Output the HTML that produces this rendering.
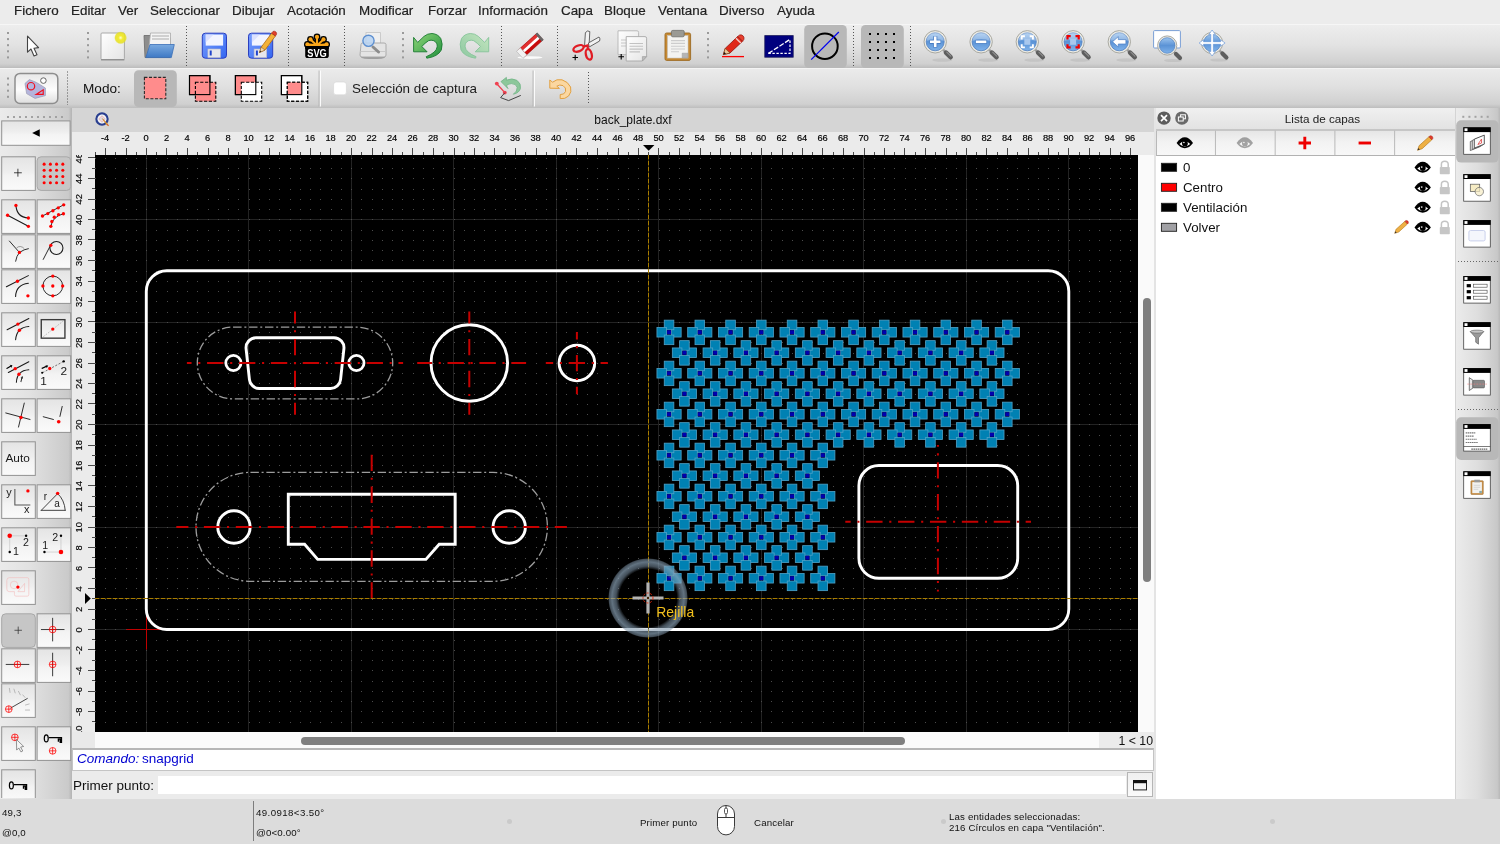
<!DOCTYPE html>
<html lang="es"><head><meta charset="utf-8"><title>back_plate.dxf</title><style>
*{box-sizing:border-box;margin:0;padding:0}
html,body{width:1500px;height:844px;overflow:hidden;background:#ececec;font-family:"Liberation Sans",sans-serif;color:#1a1a1a}
#root{will-change:transform;position:relative;width:1500px;height:844px;overflow:hidden;background:#e9e9e9}
.abs{position:absolute}
#menubar{position:absolute;left:0;top:0;width:1500px;height:24px;background:#ececec}
#menubar span{position:absolute;top:2.2px;-webkit-text-stroke:0.2px #222;font-size:13.4px;line-height:18px;color:#222;white-space:nowrap}
#tb1{position:absolute;left:0;top:24px;width:1500px;height:44px;background:linear-gradient(#ededed 0%,#e3e3e3 45%,#d0d0d0 90%,#bcbcbc 100%);border-top:1px solid #f6f6f6}
#tb2{position:absolute;left:0;top:68px;width:1500px;height:40px;background:linear-gradient(#ebebeb 0%,#e0e0e0 45%,#d0d0d0 90%,#bdbdbd 100%);border-top:1px solid #f4f4f4}
.vdots{position:absolute;width:2px;background-image:linear-gradient(#8a8a8a 50%,transparent 50%);background-size:2px 5.5px}
.sep{position:absolute;width:1px;background-image:linear-gradient(#555 34%,transparent 34%);background-size:1px 3px}
.sel{position:absolute;background:#b9b9b9;border-radius:5px}
#ldock{position:absolute;left:0;top:108px;width:72px;height:691px;background:linear-gradient(90deg,#ebebeb 0%,#e2e2e2 40%,#cacaca 95%,#b4b4b4 100%)}
.lb{position:absolute;width:34px;height:34px;background:linear-gradient(#fbfbfb,#ececec 60%,#e4e4e4);border:1px solid #b7b7b7;border-radius:1px}
.lb.on{background:#c4c4c4;border-color:#a8a8a8;border-radius:4px}
.lb svg{position:absolute;left:0;top:0;width:32px;height:32px}
#mdititle{position:absolute;left:72px;top:108px;width:1082px;height:24px;background:#d5d5d5}
#mdititle .t{position:absolute;left:0;width:1122px;top:5px;text-align:center;font-size:12px;line-height:14px;color:#111}
#rulerT{position:absolute;left:72px;top:132px;width:1082px;height:23px;background:#ebebeb}
#rulerL{position:absolute;left:72px;top:155px;width:23px;height:577px;background:#ebebeb}
#canvas{position:absolute;left:95px;top:155px;width:1043px;height:577px;background:#000}
#vscroll{position:absolute;left:1138px;top:155px;width:16px;height:577px;background:#fafafa}
#hscroll{position:absolute;left:95px;top:732px;width:1004px;height:16px;background:#fafafa}
#zoomlbl{position:absolute;left:1099px;top:732px;width:55px;height:16px;background:#ebebeb;font-size:12.3px;line-height:18px;text-align:right;padding-right:1px;color:#111}
#cmdhist{position:absolute;left:72px;top:748px;width:1082px;height:23px;background:#fff;border:1px solid #c4c4c4;border-top:2px solid #b6b6b6}
#cmdhist i{position:absolute;left:4px;top:-0.4px;font-size:13.5px;line-height:17px;color:#0000d0}
#cmdline{position:absolute;left:72px;top:771px;width:1082px;height:28px;background:#ebebeb}
#cmdline .lab{position:absolute;left:1px;top:6.5px;font-size:13.5px;line-height:16px;color:#111}
#cmdline .inp{position:absolute;left:86px;top:5px;width:968px;height:18px;background:#fff}
#cmdline .btn{position:absolute;left:1055px;top:1px;width:26px;height:25px;background:linear-gradient(#f0f0f0,#fafafa);border:1px solid #b5b5b5}
#status{position:absolute;left:0;top:799px;width:1500px;height:45px;background:#dcdcdc}
#status span{position:absolute;font-size:9.7px;line-height:12px;color:#111;white-space:nowrap;letter-spacing:0.15px}
#rpanel{position:absolute;left:1154px;top:108px;width:301px;height:691px;background:#fff}
#rdock{position:absolute;left:1455px;top:108px;width:45px;height:691px;background:linear-gradient(90deg,#ececec 0%,#dedede 50%,#c8c8c8 94%,#b8b8b8 100%)}
</style></head><body><div id="root">
<div id="menubar"><span style="left:14px">Fichero</span><span style="left:71px">Editar</span><span style="left:118px">Ver</span><span style="left:150px">Seleccionar</span><span style="left:232px">Dibujar</span><span style="left:287px">Acotación</span><span style="left:359px">Modificar</span><span style="left:428px">Forzar</span><span style="left:478px">Información</span><span style="left:561px">Capa</span><span style="left:604px">Bloque</span><span style="left:658px">Ventana</span><span style="left:719px">Diverso</span><span style="left:777px">Ayuda</span></div>
<div id="tb1"><svg class="abs" style="left:0;top:-1px" width="1500" height="44" viewBox="0 24 1500 44"><defs>
<linearGradient id="gBlue" x1="0" y1="0" x2="0" y2="1"><stop offset="0" stop-color="#9cc4ee"/><stop offset="0.5" stop-color="#5b93d6"/><stop offset="1" stop-color="#7fb2ea"/></linearGradient>
<linearGradient id="gPaper" x1="0" y1="0" x2="1" y2="1"><stop offset="0" stop-color="#ffffff"/><stop offset="1" stop-color="#e4e4e4"/></linearGradient>
<linearGradient id="gFolder" x1="0" y1="0" x2="0" y2="1"><stop offset="0" stop-color="#7aaae0"/><stop offset="1" stop-color="#3d78c4"/></linearGradient>
<linearGradient id="gGreen" x1="0" y1="0" x2="1" y2="1"><stop offset="0" stop-color="#8fd678"/><stop offset="1" stop-color="#1f8f3c"/></linearGradient>
<linearGradient id="gGreenL" x1="0" y1="0" x2="1" y2="1"><stop offset="0" stop-color="#c4e6bf"/><stop offset="1" stop-color="#8cc7a0"/></linearGradient>
<linearGradient id="gFloppy" x1="0" y1="0" x2="1" y2="1"><stop offset="0" stop-color="#7aa0ff"/><stop offset="1" stop-color="#3466f0"/></linearGradient>
<radialGradient id="gGlow"><stop offset="0" stop-color="#ffffd0"/><stop offset="0.35" stop-color="#f2ea30"/><stop offset="0.8" stop-color="#e6e020" stop-opacity="0.85"/><stop offset="1" stop-color="#e6e020" stop-opacity="0"/></radialGradient>
<g id="lens"><ellipse cx="7" cy="18.2" rx="10" ry="1.8" fill="#000" opacity="0.07"/><path d="M7.4 7.4L11 11" stroke="#9c9c9c" stroke-width="2.4" stroke-linecap="round"/><path d="M10.8 10.8L15.4 15.4" stroke="#5e5e5e" stroke-width="4.6" stroke-linecap="round"/><path d="M11.6 10.4L15.6 14.4" stroke="#8e8e8e" stroke-width="1.2" stroke-linecap="round"/><circle cx="0" cy="0" r="11.2" fill="#ecebe4" stroke="#a9a9a2" stroke-width="1"/><circle cx="0" cy="0" r="9" fill="url(#gBlue)" stroke="#4f7fc0" stroke-width="0.8"/><path d="M-8.6 -1A8.6 8.6 0 0 1 8.6 -1Q0 -4 -8.6 -1Z" fill="#fff" opacity="0.28"/></g>
</defs><rect x="7" y="32.0" width="2" height="2" fill="#9a9a9a"/><rect x="7" y="38.1" width="2" height="2" fill="#9a9a9a"/><rect x="7" y="44.2" width="2" height="2" fill="#9a9a9a"/><rect x="7" y="50.3" width="2" height="2" fill="#9a9a9a"/><rect x="7" y="56.4" width="2" height="2" fill="#9a9a9a"/><rect x="87" y="32.0" width="2" height="2" fill="#9a9a9a"/><rect x="87" y="38.1" width="2" height="2" fill="#9a9a9a"/><rect x="87" y="44.2" width="2" height="2" fill="#9a9a9a"/><rect x="87" y="50.3" width="2" height="2" fill="#9a9a9a"/><rect x="87" y="56.4" width="2" height="2" fill="#9a9a9a"/><rect x="402" y="32.0" width="2" height="2" fill="#9a9a9a"/><rect x="402" y="38.1" width="2" height="2" fill="#9a9a9a"/><rect x="402" y="44.2" width="2" height="2" fill="#9a9a9a"/><rect x="402" y="50.3" width="2" height="2" fill="#9a9a9a"/><rect x="402" y="56.4" width="2" height="2" fill="#9a9a9a"/><rect x="707" y="32.0" width="2" height="2" fill="#9a9a9a"/><rect x="707" y="38.1" width="2" height="2" fill="#9a9a9a"/><rect x="707" y="44.2" width="2" height="2" fill="#9a9a9a"/><rect x="707" y="50.3" width="2" height="2" fill="#9a9a9a"/><rect x="707" y="56.4" width="2" height="2" fill="#9a9a9a"/><line x1="186.5" y1="26" x2="186.5" y2="66" stroke="#555" stroke-width="1" stroke-dasharray="1 2"/><line x1="288.5" y1="26" x2="288.5" y2="66" stroke="#555" stroke-width="1" stroke-dasharray="1 2"/><line x1="344.5" y1="26" x2="344.5" y2="66" stroke="#555" stroke-width="1" stroke-dasharray="1 2"/><line x1="501.5" y1="26" x2="501.5" y2="66" stroke="#555" stroke-width="1" stroke-dasharray="1 2"/><line x1="557.5" y1="26" x2="557.5" y2="66" stroke="#555" stroke-width="1" stroke-dasharray="1 2"/><line x1="853.5" y1="26" x2="853.5" y2="66" stroke="#555" stroke-width="1" stroke-dasharray="1 2"/><line x1="910.5" y1="26" x2="910.5" y2="66" stroke="#555" stroke-width="1" stroke-dasharray="1 2"/><path d="M27.5 36.2V52.2L31 49L34 56L37 54.8L34 48.2L38.6 47.6Z" fill="#fff" stroke="#444" stroke-width="1.1" stroke-linejoin="round"/><rect x="101" y="33" width="23.4" height="26.6" rx="1" fill="url(#gPaper)" stroke="#a9a9a9" stroke-width="1"/><path d="M101 59.8H124.4" stroke="#8a8a8a" stroke-width="1.2"/><circle cx="120.6" cy="37.8" r="6.5" fill="url(#gGlow)"/><path d="M144 35.5h6l1.5 2H170v20H145Z" fill="#8d8d8d" stroke="#6a6a6a" stroke-width="0.8"/><path d="M150.5 33H170.5V52H148.5Z" fill="#f4f4f4" stroke="#aaa" stroke-width="0.8"/><path d="M152 36h17M152 39h17" stroke="#c4c4c4" stroke-width="1.6"/><path d="M150 44.5H174.3L171.3 57.6H145.8Z" fill="url(#gFolder)" stroke="#3a6fb8" stroke-width="0.8"/><rect x="202.3" y="33.2" width="24.2" height="25" rx="3" fill="url(#gFloppy)" stroke="#2a3fc0" stroke-width="1"/><rect x="205.70000000000002" y="34.6" width="17.4" height="11" fill="#f2f4ff"/><path d="M205.70000000000002 34.6h8l-8 8Z" fill="#d4dcff" opacity="0.8"/><rect x="207.9" y="49" width="12.6" height="8.6" fill="#e6e6ec" stroke="#b8b8c8" stroke-width="0.6"/><rect x="209.70000000000002" y="50.5" width="2" height="5" fill="#2244cc"/><rect x="248.5" y="33.2" width="24.2" height="25" rx="3" fill="url(#gFloppy)" stroke="#2a3fc0" stroke-width="1"/><rect x="251.9" y="34.6" width="17.4" height="11" fill="#f2f4ff"/><path d="M251.9 34.6h8l-8 8Z" fill="#d4dcff" opacity="0.8"/><rect x="254.1" y="49" width="12.6" height="8.6" fill="#e6e6ec" stroke="#b8b8c8" stroke-width="0.6"/><rect x="255.9" y="50.5" width="2" height="5" fill="#2244cc"/><path d="M259.5 52.5L261.2 47.2L271.6 33.2L275.4 36L265 50Z" fill="#f4b23a" stroke="#b06a10" stroke-width="0.8"/><path d="M271.6 33.2L273 31.4Q274.6 30.8 276 32Q277 33.2 276.4 34.6L275.4 36Z" fill="#e0402a" stroke="#a02010" stroke-width="0.6"/><path d="M259.5 52.5L261.2 47.2L265 50Z" fill="#f0d8b0" stroke="#805020" stroke-width="0.5"/><path d="M259.5 52.5l0.7-2l1.1 0.9Z" fill="#222"/><rect x="305.2" y="44.6" width="23.6" height="13.4" rx="2.6" fill="#000"/><g stroke="#000" stroke-width="5" stroke-linecap="round"><path d="M317 45.4L317 36.9"/><path d="M317 45.4L310.5 39.4"/><path d="M317 45.4L323.5 39.4"/><path d="M317 45.4L307.4 44.4"/><path d="M317 45.4L326.6 44.4"/></g><circle cx="317" cy="36.9" r="3.4" fill="#000"/><circle cx="310.5" cy="39.4" r="3.4" fill="#000"/><circle cx="323.5" cy="39.4" r="3.4" fill="#000"/><circle cx="307.4" cy="44.4" r="3.4" fill="#000"/><circle cx="326.6" cy="44.4" r="3.4" fill="#000"/><g stroke="#f9a61a" stroke-width="2.1" stroke-linecap="round"><path d="M317 45.4L317 36.9"/><path d="M317 45.4L310.5 39.4"/><path d="M317 45.4L323.5 39.4"/><path d="M317 45.4L307.4 44.4"/><path d="M317 45.4L326.6 44.4"/></g><circle cx="317" cy="36.9" r="2.1" fill="#f9a61a"/><circle cx="310.5" cy="39.4" r="2.1" fill="#f9a61a"/><circle cx="323.5" cy="39.4" r="2.1" fill="#f9a61a"/><circle cx="307.4" cy="44.4" r="2.1" fill="#f9a61a"/><circle cx="326.6" cy="44.4" r="2.1" fill="#f9a61a"/><rect x="306.6" y="44" width="20.8" height="2" fill="#f9a61a"/><rect x="305.2" y="46" width="23.6" height="3" fill="#000"/><text x="317" y="56.6" text-anchor="middle" font-family="Liberation Sans, sans-serif" font-weight="bold" font-size="10.4" fill="#fff" textLength="19.6" lengthAdjust="spacingAndGlyphs">SVG</text><ellipse cx="373" cy="57.5" rx="12" ry="1.6" fill="#000" opacity="0.25"/><rect x="366" y="32.6" width="14.5" height="13" fill="#efefef" stroke="#c2c2c2" stroke-width="0.8"/><path d="M361 44.5Q361 43 362.5 43H384Q386 43 386 44.5V55Q386 57 384 57H362Q360 57 360 55Z" fill="#e4e4e4" stroke="#a4a4a4" stroke-width="0.9"/><path d="M360.5 51.5H386" stroke="#c8c8c8" stroke-width="1"/><path d="M373 47L378.5 52" stroke="#8c8c8c" stroke-width="3" stroke-linecap="round"/><circle cx="368.5" cy="40.8" r="5.6" fill="#b8d4f2" fill-opacity="0.85" stroke="#5d8fd0" stroke-width="1.4"/><path d="M413.6 37.4L413.6 51.8L427.1 51.8L421.8 46.5Q425 43 428.5 40.7Q431 39.6 433.8 40.7Q437.6 42.6 437.2 46.8Q436.4 52.6 426.2 56.7L426.8 58.2Q438 56.6 441.3 50Q443.2 44 440.8 38.6Q438 34 432 33.5Q427.5 33.4 424 36.4L417.7 42.4Z" fill="url(#gGreen)" stroke="#1a7a30" stroke-width="0.9" stroke-linejoin="round"/><g transform="translate(902.3 0) scale(-1 1)"><path d="M413.6 37.4L413.6 51.8L427.1 51.8L421.8 46.5Q425 43 428.5 40.7Q431 39.6 433.8 40.7Q437.6 42.6 437.2 46.8Q436.4 52.6 426.2 56.7L426.8 58.2Q438 56.6 441.3 50Q443.2 44 440.8 38.6Q438 34 432 33.5Q427.5 33.4 424 36.4L417.7 42.4Z" fill="url(#gGreenL)" stroke="#86c49a" stroke-width="0.9" stroke-linejoin="round"/></g><ellipse cx="530" cy="57.6" rx="12.5" ry="1.4" fill="#fff" opacity="0.9"/><g transform="translate(530.4 45.2) rotate(-42)"><rect x="-13" y="-4.6" width="26" height="9.2" rx="1" fill="#c80a0a" stroke="#900" stroke-width="0.5"/><rect x="-9" y="-4.4" width="21" height="3" fill="#e23030"/><rect x="-9" y="-1.4" width="22" height="2.8" fill="#fff"/><rect x="-14.4" y="-4.8" width="5.2" height="9.6" fill="#f2f2f2" stroke="#aaa" stroke-width="0.5"/><rect x="11" y="-4.8" width="2.6" height="9.6" fill="#666"/></g><path d="M584.6 45.4L585.4 32.6Q587.6 29.8 589.8 31.6L589 46.4Z" fill="#f2f2f2" stroke="#555" stroke-width="0.9"/><path d="M588.4 43L599 37Q600.6 38.6 599.6 41L589.2 47Z" fill="#f2f2f2" stroke="#555" stroke-width="0.9"/><g fill="none" stroke="#e01c24" stroke-width="2.3"><ellipse cx="578.5" cy="48.4" rx="5.4" ry="2.9" transform="rotate(-22 578.5 48.4)"/><ellipse cx="588.8" cy="54.4" rx="2.9" ry="5.4" transform="rotate(-14 588.8 54.4)"/></g><path d="M583.5 46.6L587.5 45.5L588 49.5" stroke="#e01c24" stroke-width="2.2" fill="none"/><path d="M572.5 57.5H578M575.2 54.8V60.2" stroke="#000" stroke-width="1.1"/><path d="M618 30.8H637Q638.6 30.8 638.6 32.4V54.6H618Z" fill="url(#gPaper)" stroke="#b4b4b4" stroke-width="0.9"/><path d="M621 40h6M621 43h6M621 46h6" stroke="#c6c6c6" stroke-width="1"/><path d="M626.2 36.6H645Q646.6 36.6 646.6 38.2V56.6L642.4 61H626.2Z" fill="url(#gPaper)" stroke="#a8a8a8" stroke-width="0.9"/><path d="M646.6 56.6H642.4V61Z" fill="#bdbdbd" stroke="#999" stroke-width="0.6"/><path d="M629.5 43.5H643M629.5 46.3H643M629.5 49.1H643M629.5 51.9H640" stroke="#c2c2c2" stroke-width="1.1"/><path d="M618.4 56.8H624M621.2 54V59.6" stroke="#000" stroke-width="1.1"/><rect x="665" y="33" width="25.6" height="27.4" rx="1.6" fill="#c68a34" stroke="#9c6a22" stroke-width="0.9"/><rect x="667.6" y="35.6" width="20.4" height="22.4" fill="#f3f3f1" stroke="#c8c8c8" stroke-width="0.6"/><path d="M671.4 31.6Q671.4 30.4 672.8 30.4H682.8Q684.2 30.4 684.2 31.6V35.6Q684.2 36.8 682.8 36.8H672.8Q671.4 36.8 671.4 35.6Z" fill="#9a9a94" stroke="#6f6f6a" stroke-width="0.8"/><path d="M671 40.6H685M671 43.4H685M671 46.2H685M671 49H685M671 51.8H679" stroke="#cdcdcd" stroke-width="1.1"/><path d="M682.2 58V53.2H688V58Z" fill="#b5b5b5" stroke="#999" stroke-width="0.5"/><path d="M722 56.6H744" stroke="#f00" stroke-width="1.3"/><path d="M723.4 54.6L725.2 48.4L737.8 36.4L742.6 41.2L730 53Z" fill="#e02818" stroke="#901008" stroke-width="0.8" stroke-linejoin="round"/><path d="M737.8 36.4L739.6 35Q741.6 34.4 743.2 36Q744.6 37.8 743.8 39.6L742.6 41.2Z" fill="#e84030" stroke="#901008" stroke-width="0.7"/><path d="M736 38.2L740.8 43" stroke="#f4c8c0" stroke-width="1.6"/><path d="M723.4 54.6L725.2 48.4L730 53Z" fill="#eac89a" stroke="#704010" stroke-width="0.6"/><path d="M723.4 54.6l0.8-2.6l1.8 1.8Z" fill="#111"/><rect x="764.8" y="35.6" width="28.4" height="21.6" fill="#00007e" stroke="#1c1c5c" stroke-width="0.8"/><path d="M768.4 53.4H790V39.4" stroke="#fff" stroke-width="1.2" fill="none" stroke-dasharray="2.4 1.6"/><path d="M768.4 53.4L790 39.4" stroke="#fff" stroke-width="1.3" stroke-dasharray="5 1.6"/><rect x="804.2" y="25" width="42.6" height="43" rx="4.5" fill="#b8b8b8"/><circle cx="824.9" cy="46.2" r="12.8" fill="none" stroke="#000" stroke-width="2"/><path d="M811.2 59.6L838.8 32" stroke="#0000f0" stroke-width="1.2"/><rect x="861" y="25" width="42.8" height="43" rx="4.5" fill="#b8b8b8"/><rect x="869" y="33" width="2" height="2" fill="#000"/><rect x="869" y="41" width="2" height="2" fill="#000"/><rect x="869" y="49" width="2" height="2" fill="#000"/><rect x="869" y="57" width="2" height="2" fill="#000"/><rect x="877" y="33" width="2" height="2" fill="#000"/><rect x="877" y="41" width="2" height="2" fill="#000"/><rect x="877" y="49" width="2" height="2" fill="#000"/><rect x="877" y="57" width="2" height="2" fill="#000"/><rect x="885" y="33" width="2" height="2" fill="#000"/><rect x="885" y="41" width="2" height="2" fill="#000"/><rect x="885" y="49" width="2" height="2" fill="#000"/><rect x="885" y="57" width="2" height="2" fill="#000"/><rect x="893" y="33" width="2" height="2" fill="#000"/><rect x="893" y="41" width="2" height="2" fill="#000"/><rect x="893" y="49" width="2" height="2" fill="#000"/><rect x="893" y="57" width="2" height="2" fill="#000"/><g transform="translate(935.2 41.8)"><use href="#lens"/><path d="M-5.6 0H5.6M0 -5.6V5.6" stroke="#4a7ec4" stroke-width="4.2"/><path d="M-5.2 0H5.2M0 -5.2V5.2" stroke="#fff" stroke-width="2.6"/></g><g transform="translate(981.1 41.8)"><use href="#lens"/><path d="M-5.6 0H5.6" stroke="#4a7ec4" stroke-width="4.2"/><path d="M-5.2 0H5.2" stroke="#fff" stroke-width="2.6"/></g><g transform="translate(1027.3 41.8)"><use href="#lens"/><rect x="-3" y="-3" width="6" height="6" fill="#a9c8ee"/><path d="M-5.6 -2.4V-5.6H-2.4M2.4 -5.6H5.6V-2.4M5.6 2.4V5.6H2.4M-2.4 5.6H-5.6V2.4" stroke="#fff" stroke-width="1.9" fill="none"/></g><g transform="translate(1073.1 41.8)"><use href="#lens"/><rect x="-3" y="-3" width="6" height="6" fill="#a9c8ee"/><path d="M-5.6 -2.4V-5.6H-2.4M2.4 -5.6H5.6V-2.4M5.6 2.4V5.6H2.4M-2.4 5.6H-5.6V2.4" stroke="#f00000" stroke-width="2.2" fill="none"/></g><g transform="translate(1119.3 41.8)"><use href="#lens"/><path d="M-6.8 0L-1 -5.2V-2.2H6.6V2.2H-1V5.2Z" fill="#fff" stroke="#4a7ec4" stroke-width="0.7"/></g><rect x="1153.6" y="30.6" width="26.8" height="17.4" rx="1" fill="#fff" stroke="#7a9fd6" stroke-width="1"/><ellipse cx="1173" cy="60.5" rx="9" ry="1.6" fill="#000" opacity="0.07"/><path d="M1173.4 51.4L1176 54" stroke="#9c9c9c" stroke-width="2.2" stroke-linecap="round"/><path d="M1176 54L1180 58" stroke="#5e5e5e" stroke-width="4.2" stroke-linecap="round"/><circle cx="1167.2" cy="45.5" r="9.6" fill="#ecebe4" stroke="#a9a9a2" stroke-width="1"/><circle cx="1167.2" cy="45.5" r="7.8" fill="url(#gBlue)" stroke="#4f7fc0" stroke-width="0.7"/><ellipse cx="1219" cy="60" rx="9" ry="1.6" fill="#000" opacity="0.07"/><path d="M1219.6 50.6L1222.4 53.4" stroke="#9c9c9c" stroke-width="2.2" stroke-linecap="round"/><path d="M1222.4 53.4L1226.4 57.4" stroke="#5e5e5e" stroke-width="4.2" stroke-linecap="round"/><circle cx="1212.1" cy="43" r="10.6" fill="#ecebe4" stroke="#a9a9a2" stroke-width="1"/><circle cx="1212.1" cy="43" r="8.6" fill="url(#gBlue)" stroke="#4f7fc0" stroke-width="0.7"/><g transform="translate(1212.1 43)" fill="#fff" stroke="#5b8fd6" stroke-width="0.6"><path d="M0 -13L3.2 -8.6H1.3V-1.3H8.6V-3.2L13 0L8.6 3.2V1.3H1.3V8.6H3.2L0 13L-3.2 8.6H-1.3V1.3H-8.6V3.2L-13 0L-8.6 -3.2V-1.3H-1.3V-8.6H-3.2Z"/></g></svg></div>
<div id="tb2"><svg class="abs" style="left:0;top:-1px" width="1500" height="40" viewBox="0 68 1500 40"><rect x="7" y="77.5" width="2" height="2" fill="#9a9a9a"/><rect x="7" y="83.6" width="2" height="2" fill="#9a9a9a"/><rect x="7" y="89.7" width="2" height="2" fill="#9a9a9a"/><rect x="7" y="95.8" width="2" height="2" fill="#9a9a9a"/><defs><linearGradient id="gBtn" x1="0" y1="0" x2="0" y2="1"><stop offset="0" stop-color="#e8e8e8"/><stop offset="0.55" stop-color="#fdfdfd"/><stop offset="1" stop-color="#dedede"/></linearGradient></defs><rect x="15" y="73.4" width="42.8" height="30" rx="5" fill="url(#gBtn)" stroke="#8e8e8e" stroke-width="1.5"/><path d="M25 83.4L29.4 79.6L36.4 82.4L45.4 88V95.6L35 98.4L26.6 93.6Z" fill="#b4b4dc" stroke="#9a9ab0" stroke-width="0.7"/><circle cx="31" cy="86.2" r="3.7" fill="none" stroke="#f01020" stroke-width="1.2"/><path d="M36.2 94.4H43.2V89.8Z" fill="none" stroke="#f01020" stroke-width="1.2"/><circle cx="43.4" cy="80.6" r="2.8" fill="#fff" stroke="#555" stroke-width="0.9"/><line x1="67.5" y1="71.5" x2="67.5" y2="105" stroke="#555" stroke-width="1" stroke-dasharray="1 2"/><text x="83" y="93" font-family="Liberation Sans, sans-serif" font-size="13.6" fill="#111">Modo:</text><rect x="134" y="70.2" width="42.8" height="36.8" rx="4.5" fill="#b8b8b8"/><rect x="144.4" y="77.4" width="21.4" height="21.4" fill="#ff8c8c" stroke="#2a2a2a" stroke-width="1.1" stroke-dasharray="3 1.6"/><rect x="189.5" y="75.6" width="20.4" height="19" fill="#ff8c8c" stroke="#000" stroke-width="1.1"/><rect x="195.4" y="82.3" width="20.4" height="19" fill="#ff8c8c" stroke="#000" stroke-width="1.1" stroke-dasharray="3.2 1.6"/><rect x="189.5" y="75.6" width="20.4" height="19" fill="none" stroke="#000" stroke-width="1.1"/><rect x="235.4" y="75.6" width="20.4" height="19" fill="#ff8c8c" stroke="#000" stroke-width="1.1"/><rect x="241.3" y="82.3" width="20.4" height="19" fill="#fff" stroke="#000" stroke-width="1.1" stroke-dasharray="3.2 1.6"/><rect x="235.4" y="75.6" width="20.4" height="19" fill="none" stroke="#000" stroke-width="1.1"/><rect x="281.4" y="75.6" width="20.4" height="19" fill="#fff" stroke="#000" stroke-width="1.1"/><rect x="287.3" y="82.3" width="20.4" height="19" fill="#fff" stroke="#000" stroke-width="1.1" stroke-dasharray="3.2 1.6"/><rect x="287.3" y="82.3" width="14.5" height="12.3" fill="#ff8c8c"/><rect x="281.4" y="75.6" width="20.4" height="19" fill="none" stroke="#000" stroke-width="1.1"/><rect x="287.3" y="82.3" width="20.4" height="19" fill="none" stroke="#000" stroke-width="1.1" stroke-dasharray="3.2 1.6"/><path d="M320.2 70.5V106.5" stroke="#fff" stroke-width="1.4"/><path d="M319.1 70.5V106.5" stroke="#a8a8a8" stroke-width="0.8"/><path d="M534.2 70.5V106.5" stroke="#fff" stroke-width="1.4"/><path d="M533.1 70.5V106.5" stroke="#a8a8a8" stroke-width="0.8"/><rect x="333.6" y="82" width="12.8" height="12.8" rx="2.6" fill="#fff" stroke="#d4d4d4" stroke-width="0.6"/><text x="352" y="92.8" font-family="Liberation Sans, sans-serif" font-size="13.4" fill="#1a1a1a">Selección de captura</text><path d="M501 81.6L506.4 77.4V80.2Q512 77.6 517 80.4Q521.4 83.6 520.4 88.6Q519 93 513.4 94.2Q517.4 91.4 517.2 87.4Q516.2 83.6 511.4 83.6Q508.6 83.8 506.4 85.6L508 88.6Z" fill="#8cc79a" stroke="#6fb484" stroke-width="0.8"/><path d="M497 84L504.6 92.4" stroke="#f04050" stroke-width="1.4"/><circle cx="496.8" cy="83.6" r="1.9" fill="#f04050"/><circle cx="504.8" cy="92.6" r="1.9" fill="#f04050"/><path d="M504.8 92.8L500.6 97.6L508.6 100.6L520.8 95.4" stroke="#444" stroke-width="1" fill="none"/><path d="M549.8 88.2V80L552.6 82.2Q556.6 78.6 562 79.8Q568 81.6 570.6 87Q572 92 568.6 96Q565 99.4 560.2 98.6V94.6Q564.4 94.8 565.6 91.4Q566.4 87.6 563 85.6Q559.6 84.2 556.8 86.2L559.4 88.4Z" fill="#fbd7a0" stroke="#e2a040" stroke-width="1" stroke-linejoin="round"/><line x1="588.5" y1="72" x2="588.5" y2="104" stroke="#555" stroke-width="1" stroke-dasharray="1 2"/></svg></div>
<div id="ldock"><div class="abs" style="left:7px;top:8px;width:58px;height:2px;background-image:linear-gradient(90deg,#a2a2a2 2px,transparent 2px);background-size:6px 2px"></div><svg class="abs" style="left:0;top:0" width="72" height="690" viewBox="0 0 72 690"><defs><linearGradient id="lbg" x1="0" y1="0" x2="0" y2="1"><stop offset="0" stop-color="#e4e4e4"/><stop offset="0.45" stop-color="#eeeeee"/><stop offset="0.55" stop-color="#f3f3f3"/><stop offset="1" stop-color="#fafafa"/></linearGradient></defs><rect x="1.7" y="12.9" width="68.4" height="24.4" fill="url(#lbg)" stroke="#929292" stroke-width="1"/><rect x="1.7" y="48.8" width="33.6" height="33.6" fill="url(#lbg)" stroke="#929292" stroke-width="1"/><rect x="37.1" y="48.8" width="33.6" height="33.6" rx="4" fill="#c6c6c6" stroke="#a8a8a8" stroke-width="1"/><rect x="1.7" y="91.8" width="33.6" height="33.6" fill="url(#lbg)" stroke="#929292" stroke-width="1"/><rect x="37.1" y="91.8" width="33.6" height="33.6" fill="url(#lbg)" stroke="#929292" stroke-width="1"/><rect x="1.7" y="126.8" width="33.6" height="33.6" fill="url(#lbg)" stroke="#929292" stroke-width="1"/><rect x="37.1" y="126.8" width="33.6" height="33.6" fill="url(#lbg)" stroke="#929292" stroke-width="1"/><rect x="1.7" y="161.8" width="33.6" height="33.6" fill="url(#lbg)" stroke="#929292" stroke-width="1"/><rect x="37.1" y="161.8" width="33.6" height="33.6" fill="url(#lbg)" stroke="#929292" stroke-width="1"/><rect x="1.7" y="204.8" width="33.6" height="33.6" fill="url(#lbg)" stroke="#929292" stroke-width="1"/><rect x="37.1" y="204.8" width="33.6" height="33.6" fill="url(#lbg)" stroke="#929292" stroke-width="1"/><rect x="1.7" y="247.8" width="33.6" height="33.6" fill="url(#lbg)" stroke="#929292" stroke-width="1"/><rect x="37.1" y="247.8" width="33.6" height="33.6" fill="url(#lbg)" stroke="#929292" stroke-width="1"/><rect x="1.7" y="290.8" width="33.6" height="33.6" fill="url(#lbg)" stroke="#929292" stroke-width="1"/><rect x="37.1" y="290.8" width="33.6" height="33.6" fill="url(#lbg)" stroke="#929292" stroke-width="1"/><rect x="1.7" y="333.8" width="33.6" height="33.6" fill="url(#lbg)" stroke="#929292" stroke-width="1"/><rect x="1.7" y="376.8" width="33.6" height="33.6" fill="url(#lbg)" stroke="#929292" stroke-width="1"/><rect x="37.1" y="376.8" width="33.6" height="33.6" fill="url(#lbg)" stroke="#929292" stroke-width="1"/><rect x="1.7" y="419.8" width="33.6" height="33.6" fill="url(#lbg)" stroke="#929292" stroke-width="1"/><rect x="37.1" y="419.8" width="33.6" height="33.6" fill="url(#lbg)" stroke="#929292" stroke-width="1"/><rect x="1.7" y="462.8" width="33.6" height="33.6" fill="url(#lbg)" stroke="#929292" stroke-width="1"/><rect x="1.7" y="505.8" width="33.6" height="33.6" rx="4" fill="#c6c6c6" stroke="#a8a8a8" stroke-width="1"/><rect x="37.1" y="505.8" width="33.6" height="33.6" fill="url(#lbg)" stroke="#929292" stroke-width="1"/><rect x="1.7" y="540.8" width="33.6" height="33.6" fill="url(#lbg)" stroke="#929292" stroke-width="1"/><rect x="37.1" y="540.8" width="33.6" height="33.6" fill="url(#lbg)" stroke="#929292" stroke-width="1"/><rect x="1.7" y="575.8" width="33.6" height="33.6" fill="url(#lbg)" stroke="#929292" stroke-width="1"/><rect x="1.7" y="618.8" width="33.6" height="33.6" fill="url(#lbg)" stroke="#929292" stroke-width="1"/><rect x="37.1" y="618.8" width="33.6" height="33.6" fill="url(#lbg)" stroke="#929292" stroke-width="1"/><rect x="1.7" y="661.8" width="33.6" height="31" fill="url(#lbg)" stroke="#929292" stroke-width="1"/><g transform="translate(0 0) scale(0.15170)"><path d="M262 140V190L212 165Z" fill="#000"/><path d="M118 403V450M95 427H141" stroke="#111" stroke-width="5" fill="none" stroke-linecap="round" /><circle cx="291" cy="370" r="10" fill="#ff0000"/><circle cx="291" cy="411" r="10" fill="#ff0000"/><circle cx="291" cy="452" r="10" fill="#ff0000"/><circle cx="291" cy="493" r="10" fill="#ff0000"/><circle cx="332" cy="370" r="10" fill="#ff0000"/><circle cx="332" cy="411" r="10" fill="#ff0000"/><circle cx="332" cy="452" r="10" fill="#ff0000"/><circle cx="332" cy="493" r="10" fill="#ff0000"/><circle cx="373" cy="370" r="10" fill="#ff0000"/><circle cx="373" cy="411" r="10" fill="#ff0000"/><circle cx="373" cy="452" r="10" fill="#ff0000"/><circle cx="373" cy="493" r="10" fill="#ff0000"/><circle cx="414" cy="370" r="10" fill="#ff0000"/><circle cx="414" cy="411" r="10" fill="#ff0000"/><circle cx="414" cy="452" r="10" fill="#ff0000"/><circle cx="414" cy="493" r="10" fill="#ff0000"/></g><g transform="translate(0 88) scale(0.15170)"><path d="M50 127L187 200" stroke="#1a1a1a" stroke-width="7" fill="none" stroke-linecap="round" /><path d="M105 62Q110 140 187 145" stroke="#1a1a1a" stroke-width="7" fill="none" stroke-linecap="round" /><circle cx="105" cy="62" r="11" fill="#ff0000"/><circle cx="50" cy="127" r="11" fill="#ff0000"/><circle cx="187" cy="145" r="11" fill="#ff0000"/><circle cx="187" cy="200" r="11" fill="#ff0000"/><path d="M280 132L420 58" stroke="#1a1a1a" stroke-width="6" fill="none" stroke-linecap="round" /><path d="M335 200Q345 135 418 117" stroke="#1a1a1a" stroke-width="6" fill="none" stroke-linecap="round" /><circle cx="280" cy="132" r="11" fill="#ff0000"/><circle cx="315" cy="116" r="11" fill="#ff0000"/><circle cx="349" cy="97" r="11" fill="#ff0000"/><circle cx="384" cy="78" r="11" fill="#ff0000"/><circle cx="420" cy="58" r="11" fill="#ff0000"/><circle cx="335" cy="200" r="11" fill="#ff0000"/><circle cx="342" cy="168" r="11" fill="#ff0000"/><circle cx="358" cy="140" r="11" fill="#ff0000"/><circle cx="386" cy="123" r="11" fill="#ff0000"/><circle cx="418" cy="117" r="11" fill="#ff0000"/><path d="M62 297L128 372M128 372Q108 395 103 430M128 372Q160 350 187 347" stroke="#1a1a1a" stroke-width="6" fill="none" stroke-linecap="round" /><path d="M112 340Q135 322 158 345" stroke="#333" stroke-width="3" fill="none" stroke-linecap="round" /><circle cx="128" cy="372" r="11" fill="#ff0000"/><path d="M285 418L333 325" stroke="#1a1a1a" stroke-width="6" fill="none" stroke-linecap="round" /><circle cx="372" cy="343" r="43" fill="none" stroke="#1a1a1a" stroke-width="7"/><circle cx="335" cy="325" r="11" fill="#ff0000"/><path d="M42 598L187 525" stroke="#1a1a1a" stroke-width="7" fill="none" stroke-linecap="round" /><path d="M103 662Q105 585 187 575" stroke="#1a1a1a" stroke-width="7" fill="none" stroke-linecap="round" /><circle cx="115" cy="562" r="11" fill="#ff0000"/><circle cx="184" cy="658" r="11" fill="#ff0000"/><circle cx="348" cy="593" r="65" fill="none" stroke="#1a1a1a" stroke-width="6"/><circle cx="348" cy="528" r="11" fill="#ff0000"/><circle cx="283" cy="593" r="11" fill="#ff0000"/><circle cx="348" cy="593" r="11" fill="#ff0000"/><circle cx="413" cy="593" r="11" fill="#ff0000"/><circle cx="348" cy="658" r="11" fill="#ff0000"/></g><g transform="translate(0 198) scale(0.15170)"><path d="M47 157L190 82" stroke="#1a1a1a" stroke-width="7" fill="none" stroke-linecap="round" /><path d="M103 222Q110 140 190 135" stroke="#1a1a1a" stroke-width="7" fill="none" stroke-linecap="round" /><circle cx="118" cy="119" r="11" fill="#ff0000"/><circle cx="128" cy="160" r="11" fill="#ff0000"/><rect x="272" y="90" width="156" height="122" fill="none" stroke="#3a3a3a" stroke-width="9"/><path d="M285 203L418 98" stroke="#666" stroke-width="2.5" fill="none"  stroke-dasharray="12 8"/><circle cx="348" cy="152" r="11" fill="#ff0000"/><path d="M55 438L190 368" stroke="#1a1a1a" stroke-width="7" fill="none" stroke-linecap="round" /><path d="M108 503Q112 425 190 420" stroke="#1a1a1a" stroke-width="7" fill="none" stroke-linecap="round" /><circle cx="100" cy="413" r="11" fill="#ff0000"/><circle cx="125" cy="450" r="11" fill="#ff0000"/><path d="M40 410L70 392L62 388L82 390L74 408L72 400L46 416Z" fill="#000"/><path d="M135 500L142 470L134 474L148 462L152 482L146 476L140 502Z" fill="#000"/><path d="M280 440L420 365" stroke="#222" stroke-width="4" fill="none"  stroke-dasharray="14 10"/><circle cx="278" cy="440" r="7" fill="#000"/><circle cx="420" cy="365" r="8" fill="#000"/><circle cx="328" cy="412" r="11" fill="#ff0000"/><path d="M272 408L304 394L296 390L318 392L308 410L306 402L278 416Z" fill="#000"/><text x="265" y="518" font-family="Liberation Sans, sans-serif" font-size="78" fill="#1a1a1a">1</text><text x="398" y="452" font-family="Liberation Sans, sans-serif" font-size="78" fill="#1a1a1a">2</text><path d="M38 705L198 748M160 640L122 798" stroke="#1a1a1a" stroke-width="6" fill="none" stroke-linecap="round" /><circle cx="138" cy="735" r="12" fill="#ff0000"/><path d="M285 730L352 748M410 662L395 728" stroke="#1a1a1a" stroke-width="6" fill="none" stroke-linecap="round" /><circle cx="387" cy="763" r="12" fill="#ff0000"/></g><g transform="translate(0 328) scale(0.15170)"><text x="36" y="170" font-family="Liberation Sans, sans-serif" font-size="78" fill="#1a1a1a">Auto</text><text x="42" y="398" font-family="Liberation Sans, sans-serif" font-size="72" fill="#1a1a1a">y</text><text x="158" y="508" font-family="Liberation Sans, sans-serif" font-size="72" fill="#1a1a1a">x</text><path d="M98 350V455H200" stroke="#555" stroke-width="7" fill="none"  stroke-linecap="butt"/><circle cx="184" cy="362" r="11" fill="#ff0000"/><path d="M272 490L380 380M272 490H430M380 380Q425 420 430 490" stroke="#333" stroke-width="6" fill="none" stroke-linecap="round" /><text x="288" y="425" font-family="Liberation Sans, sans-serif" font-size="66" fill="#1a1a1a">r</text><text x="357" y="468" font-family="Liberation Sans, sans-serif" font-size="66" fill="#1a1a1a">a</text><circle cx="380" cy="378" r="11" fill="#ff0000"/><path d="M64 658H172M64 658V765" stroke="#b0b0b0" stroke-width="3" fill="none" stroke-linecap="round" /><circle cx="64" cy="658" r="15" fill="#ff0000"/><circle cx="172" cy="658" r="8" fill="#000"/><circle cx="64" cy="765" r="8" fill="#000"/><text x="152" y="728" font-family="Liberation Sans, sans-serif" font-size="70" fill="#1a1a1a">2</text><text x="86" y="784" font-family="Liberation Sans, sans-serif" font-size="70" fill="#1a1a1a">1</text><path d="M293 765H402M402 658V765" stroke="#b0b0b0" stroke-width="3" fill="none" stroke-linecap="round" /><circle cx="402" cy="765" r="15" fill="#ff0000"/><circle cx="402" cy="658" r="8" fill="#000"/><circle cx="293" cy="765" r="8" fill="#000"/><text x="344" y="692" font-family="Liberation Sans, sans-serif" font-size="70" fill="#1a1a1a">2</text><text x="278" y="742" font-family="Liberation Sans, sans-serif" font-size="70" fill="#1a1a1a">1</text></g><g transform="translate(0 456) scale(0.15170)"><g fill="none" stroke="#f3aaaa" stroke-width="3"><path d="M62 90H180Q190 90 190 100V200Q190 212 180 212H105Q95 212 95 200V182H60Q45 182 45 165V108Q45 90 62 90Z"/><circle cx="93" cy="138" r="25"/><path d="M118 182H162V128Z"/></g><circle cx="118" cy="152" r="11" fill="#f00"/><path d="M120 415V459M98 437H142" stroke="#333" stroke-width="5" fill="none" stroke-linecap="round" /><path d="M270 432H425M347 355V510" stroke="#000" stroke-width="5" fill="none"  stroke-linecap="butt"/><g stroke="#ff0000" stroke-width="5" fill="none"><circle cx="347" cy="432" r="22"/><path d="M325 432H369M347 410V454"/></g><path d="M38 662H193" stroke="#000" stroke-width="5" fill="none"  stroke-linecap="butt"/><g stroke="#ff0000" stroke-width="5" fill="none"><circle cx="115" cy="662" r="22"/><path d="M93 662H137M115 640V684"/></g><path d="M347 585V740" stroke="#000" stroke-width="5" fill="none"  stroke-linecap="butt"/><g stroke="#ff0000" stroke-width="5" fill="none"><circle cx="347" cy="662" r="22"/><path d="M325 662H369M347 640V684"/></g></g><g transform="translate(0 572) scale(0.15170)"><path d="M70 185L180 122" stroke="#111" stroke-width="5" fill="none" stroke-linecap="round" /><g stroke="#ff0000" stroke-width="5" fill="none"><circle cx="58" cy="192" r="22"/><path d="M36 192H80M58 170V214"/></g><path d="M62 55L66 82M92 60L100 85M122 75L134 98M150 98L165 115M168 165L192 158M168 198H195" stroke="#a0a0a0" stroke-width="4.5" fill="none" stroke-linecap="round" /><g stroke="#ff0000" stroke-width="5" fill="none"><circle cx="98" cy="378" r="22"/><path d="M76 378H120M98 356V400"/></g><path d="M108 392L110 462L124 448L138 474L150 468L136 442L156 438Z" fill="#f4f4f4" stroke="#555" stroke-width="4"/><g fill="none" stroke="#000"><ellipse cx="305" cy="385" rx="13" ry="23" stroke-width="8"/><path d="M322 380H405V410H397V390H385V407" stroke-width="9" stroke-linejoin="miter"/></g><g stroke="#ff0000" stroke-width="5" fill="none"><circle cx="347" cy="467" r="22"/><path d="M325 467H369M347 445V489"/></g><g fill="none" stroke="#000"><ellipse cx="75" cy="695" rx="13" ry="23" stroke-width="8"/><path d="M92 690H175V720H167V700H155V717" stroke-width="9" stroke-linejoin="miter"/></g></g></svg></div>
<div id="mdititle"><div class="t">back_plate.dxf</div><svg class="abs" style="left:22px;top:3px" width="18" height="18" viewBox="0 0 18 18"><circle cx="8" cy="8" r="5.6" fill="#f6f6f6" stroke="#2a3f90" stroke-width="2.2"/><path d="M8 3V13M3 8H13" stroke="#c8c8d8" stroke-width="0.7"/><circle cx="8" cy="8" r="2.4" fill="none" stroke="#e8a0a0" stroke-width="0.7"/><path d="M8.4 7.6L13.4 12.8L14.6 14.8L12.6 13.8Z" fill="#f4b030" stroke="#c07010" stroke-width="0.5"/><path d="M13.4 12.8L14.8 15L12.6 13.8Z" fill="#e05030"/></svg></div>
<div id="rulerT"><svg width="1066" height="23" style="position:absolute;left:0;top:0"><path d="M23.5 20V23M33.5 16V23M43.5 20V23M54.5 16V23M64.5 20V23M74.5 16V23M84.5 20V23M94.5 16V23M105.5 20V23M115.5 16V23M125.5 20V23M136.5 16V23M146.5 20V23M156.5 16V23M166.5 20V23M176.5 16V23M187.5 20V23M197.5 16V23M207.5 20V23M218.5 16V23M228.5 20V23M238.5 16V23M248.5 20V23M258.5 16V23M269.5 20V23M279.5 16V23M289.5 20V23M300.5 16V23M310.5 20V23M320.5 16V23M330.5 20V23M340.5 16V23M351.5 20V23M361.5 16V23M371.5 20V23M382.5 16V23M392.5 20V23M402.5 16V23M412.5 20V23M422.5 16V23M433.5 20V23M443.5 16V23M453.5 20V23M464.5 16V23M474.5 20V23M484.5 16V23M494.5 20V23M504.5 16V23M515.5 20V23M525.5 16V23M535.5 20V23M546.5 16V23M556.5 20V23M566.5 16V23M576.5 20V23M586.5 16V23M597.5 20V23M607.5 16V23M617.5 20V23M628.5 16V23M638.5 20V23M648.5 16V23M658.5 20V23M668.5 16V23M679.5 20V23M689.5 16V23M699.5 20V23M710.5 16V23M720.5 20V23M730.5 16V23M740.5 20V23M750.5 16V23M761.5 20V23M771.5 16V23M781.5 20V23M792.5 16V23M802.5 20V23M812.5 16V23M822.5 20V23M832.5 16V23M843.5 20V23M853.5 16V23M863.5 20V23M874.5 16V23M884.5 20V23M894.5 16V23M904.5 20V23M914.5 16V23M925.5 20V23M935.5 16V23M945.5 20V23M956.5 16V23M966.5 20V23M976.5 16V23M986.5 20V23M996.5 16V23M1007.5 20V23M1017.5 16V23M1027.5 20V23M1038.5 16V23M1048.5 20V23M1058.5 16V23" stroke="#4a4a4a" stroke-width="1" fill="none"/><text transform="translate(33.1 9) scale(1.1 1.04)" text-anchor="middle" font-family="Liberation Sans, sans-serif" font-size="8.5" fill="#000" stroke="#000" stroke-width="0.15">-4</text><text transform="translate(53.6 9) scale(1.1 1.04)" text-anchor="middle" font-family="Liberation Sans, sans-serif" font-size="8.5" fill="#000" stroke="#000" stroke-width="0.15">-2</text><text transform="translate(74.1 9) scale(1.1 1.04)" text-anchor="middle" font-family="Liberation Sans, sans-serif" font-size="8.5" fill="#000" stroke="#000" stroke-width="0.15">0</text><text transform="translate(94.6 9) scale(1.1 1.04)" text-anchor="middle" font-family="Liberation Sans, sans-serif" font-size="8.5" fill="#000" stroke="#000" stroke-width="0.15">2</text><text transform="translate(115.1 9) scale(1.1 1.04)" text-anchor="middle" font-family="Liberation Sans, sans-serif" font-size="8.5" fill="#000" stroke="#000" stroke-width="0.15">4</text><text transform="translate(135.6 9) scale(1.1 1.04)" text-anchor="middle" font-family="Liberation Sans, sans-serif" font-size="8.5" fill="#000" stroke="#000" stroke-width="0.15">6</text><text transform="translate(156.1 9) scale(1.1 1.04)" text-anchor="middle" font-family="Liberation Sans, sans-serif" font-size="8.5" fill="#000" stroke="#000" stroke-width="0.15">8</text><text transform="translate(176.6 9) scale(1.1 1.04)" text-anchor="middle" font-family="Liberation Sans, sans-serif" font-size="8.5" fill="#000" stroke="#000" stroke-width="0.15">10</text><text transform="translate(197.1 9) scale(1.1 1.04)" text-anchor="middle" font-family="Liberation Sans, sans-serif" font-size="8.5" fill="#000" stroke="#000" stroke-width="0.15">12</text><text transform="translate(217.6 9) scale(1.1 1.04)" text-anchor="middle" font-family="Liberation Sans, sans-serif" font-size="8.5" fill="#000" stroke="#000" stroke-width="0.15">14</text><text transform="translate(238.1 9) scale(1.1 1.04)" text-anchor="middle" font-family="Liberation Sans, sans-serif" font-size="8.5" fill="#000" stroke="#000" stroke-width="0.15">16</text><text transform="translate(258.6 9) scale(1.1 1.04)" text-anchor="middle" font-family="Liberation Sans, sans-serif" font-size="8.5" fill="#000" stroke="#000" stroke-width="0.15">18</text><text transform="translate(279.1 9) scale(1.1 1.04)" text-anchor="middle" font-family="Liberation Sans, sans-serif" font-size="8.5" fill="#000" stroke="#000" stroke-width="0.15">20</text><text transform="translate(299.6 9) scale(1.1 1.04)" text-anchor="middle" font-family="Liberation Sans, sans-serif" font-size="8.5" fill="#000" stroke="#000" stroke-width="0.15">22</text><text transform="translate(320.1 9) scale(1.1 1.04)" text-anchor="middle" font-family="Liberation Sans, sans-serif" font-size="8.5" fill="#000" stroke="#000" stroke-width="0.15">24</text><text transform="translate(340.6 9) scale(1.1 1.04)" text-anchor="middle" font-family="Liberation Sans, sans-serif" font-size="8.5" fill="#000" stroke="#000" stroke-width="0.15">26</text><text transform="translate(361.1 9) scale(1.1 1.04)" text-anchor="middle" font-family="Liberation Sans, sans-serif" font-size="8.5" fill="#000" stroke="#000" stroke-width="0.15">28</text><text transform="translate(381.6 9) scale(1.1 1.04)" text-anchor="middle" font-family="Liberation Sans, sans-serif" font-size="8.5" fill="#000" stroke="#000" stroke-width="0.15">30</text><text transform="translate(402.1 9) scale(1.1 1.04)" text-anchor="middle" font-family="Liberation Sans, sans-serif" font-size="8.5" fill="#000" stroke="#000" stroke-width="0.15">32</text><text transform="translate(422.6 9) scale(1.1 1.04)" text-anchor="middle" font-family="Liberation Sans, sans-serif" font-size="8.5" fill="#000" stroke="#000" stroke-width="0.15">34</text><text transform="translate(443.1 9) scale(1.1 1.04)" text-anchor="middle" font-family="Liberation Sans, sans-serif" font-size="8.5" fill="#000" stroke="#000" stroke-width="0.15">36</text><text transform="translate(463.6 9) scale(1.1 1.04)" text-anchor="middle" font-family="Liberation Sans, sans-serif" font-size="8.5" fill="#000" stroke="#000" stroke-width="0.15">38</text><text transform="translate(484.1 9) scale(1.1 1.04)" text-anchor="middle" font-family="Liberation Sans, sans-serif" font-size="8.5" fill="#000" stroke="#000" stroke-width="0.15">40</text><text transform="translate(504.6 9) scale(1.1 1.04)" text-anchor="middle" font-family="Liberation Sans, sans-serif" font-size="8.5" fill="#000" stroke="#000" stroke-width="0.15">42</text><text transform="translate(525.1 9) scale(1.1 1.04)" text-anchor="middle" font-family="Liberation Sans, sans-serif" font-size="8.5" fill="#000" stroke="#000" stroke-width="0.15">44</text><text transform="translate(545.6 9) scale(1.1 1.04)" text-anchor="middle" font-family="Liberation Sans, sans-serif" font-size="8.5" fill="#000" stroke="#000" stroke-width="0.15">46</text><text transform="translate(566.1 9) scale(1.1 1.04)" text-anchor="middle" font-family="Liberation Sans, sans-serif" font-size="8.5" fill="#000" stroke="#000" stroke-width="0.15">48</text><text transform="translate(586.6 9) scale(1.1 1.04)" text-anchor="middle" font-family="Liberation Sans, sans-serif" font-size="8.5" fill="#000" stroke="#000" stroke-width="0.15">50</text><text transform="translate(607.1 9) scale(1.1 1.04)" text-anchor="middle" font-family="Liberation Sans, sans-serif" font-size="8.5" fill="#000" stroke="#000" stroke-width="0.15">52</text><text transform="translate(627.6 9) scale(1.1 1.04)" text-anchor="middle" font-family="Liberation Sans, sans-serif" font-size="8.5" fill="#000" stroke="#000" stroke-width="0.15">54</text><text transform="translate(648.1 9) scale(1.1 1.04)" text-anchor="middle" font-family="Liberation Sans, sans-serif" font-size="8.5" fill="#000" stroke="#000" stroke-width="0.15">56</text><text transform="translate(668.6 9) scale(1.1 1.04)" text-anchor="middle" font-family="Liberation Sans, sans-serif" font-size="8.5" fill="#000" stroke="#000" stroke-width="0.15">58</text><text transform="translate(689.1 9) scale(1.1 1.04)" text-anchor="middle" font-family="Liberation Sans, sans-serif" font-size="8.5" fill="#000" stroke="#000" stroke-width="0.15">60</text><text transform="translate(709.6 9) scale(1.1 1.04)" text-anchor="middle" font-family="Liberation Sans, sans-serif" font-size="8.5" fill="#000" stroke="#000" stroke-width="0.15">62</text><text transform="translate(730.1 9) scale(1.1 1.04)" text-anchor="middle" font-family="Liberation Sans, sans-serif" font-size="8.5" fill="#000" stroke="#000" stroke-width="0.15">64</text><text transform="translate(750.6 9) scale(1.1 1.04)" text-anchor="middle" font-family="Liberation Sans, sans-serif" font-size="8.5" fill="#000" stroke="#000" stroke-width="0.15">66</text><text transform="translate(771.1 9) scale(1.1 1.04)" text-anchor="middle" font-family="Liberation Sans, sans-serif" font-size="8.5" fill="#000" stroke="#000" stroke-width="0.15">68</text><text transform="translate(791.6 9) scale(1.1 1.04)" text-anchor="middle" font-family="Liberation Sans, sans-serif" font-size="8.5" fill="#000" stroke="#000" stroke-width="0.15">70</text><text transform="translate(812.1 9) scale(1.1 1.04)" text-anchor="middle" font-family="Liberation Sans, sans-serif" font-size="8.5" fill="#000" stroke="#000" stroke-width="0.15">72</text><text transform="translate(832.6 9) scale(1.1 1.04)" text-anchor="middle" font-family="Liberation Sans, sans-serif" font-size="8.5" fill="#000" stroke="#000" stroke-width="0.15">74</text><text transform="translate(853.1 9) scale(1.1 1.04)" text-anchor="middle" font-family="Liberation Sans, sans-serif" font-size="8.5" fill="#000" stroke="#000" stroke-width="0.15">76</text><text transform="translate(873.6 9) scale(1.1 1.04)" text-anchor="middle" font-family="Liberation Sans, sans-serif" font-size="8.5" fill="#000" stroke="#000" stroke-width="0.15">78</text><text transform="translate(894.1 9) scale(1.1 1.04)" text-anchor="middle" font-family="Liberation Sans, sans-serif" font-size="8.5" fill="#000" stroke="#000" stroke-width="0.15">80</text><text transform="translate(914.6 9) scale(1.1 1.04)" text-anchor="middle" font-family="Liberation Sans, sans-serif" font-size="8.5" fill="#000" stroke="#000" stroke-width="0.15">82</text><text transform="translate(935.1 9) scale(1.1 1.04)" text-anchor="middle" font-family="Liberation Sans, sans-serif" font-size="8.5" fill="#000" stroke="#000" stroke-width="0.15">84</text><text transform="translate(955.6 9) scale(1.1 1.04)" text-anchor="middle" font-family="Liberation Sans, sans-serif" font-size="8.5" fill="#000" stroke="#000" stroke-width="0.15">86</text><text transform="translate(976.1 9) scale(1.1 1.04)" text-anchor="middle" font-family="Liberation Sans, sans-serif" font-size="8.5" fill="#000" stroke="#000" stroke-width="0.15">88</text><text transform="translate(996.6 9) scale(1.1 1.04)" text-anchor="middle" font-family="Liberation Sans, sans-serif" font-size="8.5" fill="#000" stroke="#000" stroke-width="0.15">90</text><text transform="translate(1017.1 9) scale(1.1 1.04)" text-anchor="middle" font-family="Liberation Sans, sans-serif" font-size="8.5" fill="#000" stroke="#000" stroke-width="0.15">92</text><text transform="translate(1037.6 9) scale(1.1 1.04)" text-anchor="middle" font-family="Liberation Sans, sans-serif" font-size="8.5" fill="#000" stroke="#000" stroke-width="0.15">94</text><text transform="translate(1058.1 9) scale(1.1 1.04)" text-anchor="middle" font-family="Liberation Sans, sans-serif" font-size="8.5" fill="#000" stroke="#000" stroke-width="0.15">96</text><path d="M571 13H582.4L576.7 18.8Z" fill="#000"/></svg></div>
<div id="rulerL"><svg width="23" height="577" style="position:absolute;left:0;top:0"><path d="M20 566.5H23M16 556.5H23M20 546.5H23M16 536.5H23M20 525.5H23M16 515.5H23M20 505.5H23M16 494.5H23M20 484.5H23M16 474.5H23M20 464.5H23M16 454.5H23M20 443.5H23M16 433.5H23M20 423.5H23M16 412.5H23M20 402.5H23M16 392.5H23M20 382.5H23M16 372.5H23M20 361.5H23M16 351.5H23M20 341.5H23M16 330.5H23M20 320.5H23M16 310.5H23M20 300.5H23M16 290.5H23M20 279.5H23M16 269.5H23M20 259.5H23M16 248.5H23M20 238.5H23M16 228.5H23M20 218.5H23M16 208.5H23M20 197.5H23M16 187.5H23M20 177.5H23M16 166.5H23M20 156.5H23M16 146.5H23M20 136.5H23M16 126.5H23M20 115.5H23M16 105.5H23M20 95.5H23M16 84.5H23M20 74.5H23M16 64.5H23M20 54.5H23M16 44.5H23M20 33.5H23M16 23.5H23M20 13.5H23M16 2.5H23" stroke="#4a4a4a" stroke-width="1" fill="none"/><text transform="translate(9.6 577.3) rotate(-90) scale(1.1 1.0)" text-anchor="middle" font-family="Liberation Sans, sans-serif" font-size="8.5" fill="#000" stroke="#000" stroke-width="0.15">-10</text><text transform="translate(9.6 556.8) rotate(-90) scale(1.1 1.0)" text-anchor="middle" font-family="Liberation Sans, sans-serif" font-size="8.5" fill="#000" stroke="#000" stroke-width="0.15">-8</text><text transform="translate(9.6 536.3) rotate(-90) scale(1.1 1.0)" text-anchor="middle" font-family="Liberation Sans, sans-serif" font-size="8.5" fill="#000" stroke="#000" stroke-width="0.15">-6</text><text transform="translate(9.6 515.8) rotate(-90) scale(1.1 1.0)" text-anchor="middle" font-family="Liberation Sans, sans-serif" font-size="8.5" fill="#000" stroke="#000" stroke-width="0.15">-4</text><text transform="translate(9.6 495.3) rotate(-90) scale(1.1 1.0)" text-anchor="middle" font-family="Liberation Sans, sans-serif" font-size="8.5" fill="#000" stroke="#000" stroke-width="0.15">-2</text><text transform="translate(9.6 474.8) rotate(-90) scale(1.1 1.0)" text-anchor="middle" font-family="Liberation Sans, sans-serif" font-size="8.5" fill="#000" stroke="#000" stroke-width="0.15">0</text><text transform="translate(9.6 454.3) rotate(-90) scale(1.1 1.0)" text-anchor="middle" font-family="Liberation Sans, sans-serif" font-size="8.5" fill="#000" stroke="#000" stroke-width="0.15">2</text><text transform="translate(9.6 433.8) rotate(-90) scale(1.1 1.0)" text-anchor="middle" font-family="Liberation Sans, sans-serif" font-size="8.5" fill="#000" stroke="#000" stroke-width="0.15">4</text><text transform="translate(9.6 413.3) rotate(-90) scale(1.1 1.0)" text-anchor="middle" font-family="Liberation Sans, sans-serif" font-size="8.5" fill="#000" stroke="#000" stroke-width="0.15">6</text><text transform="translate(9.6 392.8) rotate(-90) scale(1.1 1.0)" text-anchor="middle" font-family="Liberation Sans, sans-serif" font-size="8.5" fill="#000" stroke="#000" stroke-width="0.15">8</text><text transform="translate(9.6 372.3) rotate(-90) scale(1.1 1.0)" text-anchor="middle" font-family="Liberation Sans, sans-serif" font-size="8.5" fill="#000" stroke="#000" stroke-width="0.15">10</text><text transform="translate(9.6 351.8) rotate(-90) scale(1.1 1.0)" text-anchor="middle" font-family="Liberation Sans, sans-serif" font-size="8.5" fill="#000" stroke="#000" stroke-width="0.15">12</text><text transform="translate(9.6 331.3) rotate(-90) scale(1.1 1.0)" text-anchor="middle" font-family="Liberation Sans, sans-serif" font-size="8.5" fill="#000" stroke="#000" stroke-width="0.15">14</text><text transform="translate(9.6 310.8) rotate(-90) scale(1.1 1.0)" text-anchor="middle" font-family="Liberation Sans, sans-serif" font-size="8.5" fill="#000" stroke="#000" stroke-width="0.15">16</text><text transform="translate(9.6 290.3) rotate(-90) scale(1.1 1.0)" text-anchor="middle" font-family="Liberation Sans, sans-serif" font-size="8.5" fill="#000" stroke="#000" stroke-width="0.15">18</text><text transform="translate(9.6 269.8) rotate(-90) scale(1.1 1.0)" text-anchor="middle" font-family="Liberation Sans, sans-serif" font-size="8.5" fill="#000" stroke="#000" stroke-width="0.15">20</text><text transform="translate(9.6 249.3) rotate(-90) scale(1.1 1.0)" text-anchor="middle" font-family="Liberation Sans, sans-serif" font-size="8.5" fill="#000" stroke="#000" stroke-width="0.15">22</text><text transform="translate(9.6 228.8) rotate(-90) scale(1.1 1.0)" text-anchor="middle" font-family="Liberation Sans, sans-serif" font-size="8.5" fill="#000" stroke="#000" stroke-width="0.15">24</text><text transform="translate(9.6 208.3) rotate(-90) scale(1.1 1.0)" text-anchor="middle" font-family="Liberation Sans, sans-serif" font-size="8.5" fill="#000" stroke="#000" stroke-width="0.15">26</text><text transform="translate(9.6 187.8) rotate(-90) scale(1.1 1.0)" text-anchor="middle" font-family="Liberation Sans, sans-serif" font-size="8.5" fill="#000" stroke="#000" stroke-width="0.15">28</text><text transform="translate(9.6 167.3) rotate(-90) scale(1.1 1.0)" text-anchor="middle" font-family="Liberation Sans, sans-serif" font-size="8.5" fill="#000" stroke="#000" stroke-width="0.15">30</text><text transform="translate(9.6 146.8) rotate(-90) scale(1.1 1.0)" text-anchor="middle" font-family="Liberation Sans, sans-serif" font-size="8.5" fill="#000" stroke="#000" stroke-width="0.15">32</text><text transform="translate(9.6 126.3) rotate(-90) scale(1.1 1.0)" text-anchor="middle" font-family="Liberation Sans, sans-serif" font-size="8.5" fill="#000" stroke="#000" stroke-width="0.15">34</text><text transform="translate(9.6 105.8) rotate(-90) scale(1.1 1.0)" text-anchor="middle" font-family="Liberation Sans, sans-serif" font-size="8.5" fill="#000" stroke="#000" stroke-width="0.15">36</text><text transform="translate(9.6 85.3) rotate(-90) scale(1.1 1.0)" text-anchor="middle" font-family="Liberation Sans, sans-serif" font-size="8.5" fill="#000" stroke="#000" stroke-width="0.15">38</text><text transform="translate(9.6 64.8) rotate(-90) scale(1.1 1.0)" text-anchor="middle" font-family="Liberation Sans, sans-serif" font-size="8.5" fill="#000" stroke="#000" stroke-width="0.15">40</text><text transform="translate(9.6 44.3) rotate(-90) scale(1.1 1.0)" text-anchor="middle" font-family="Liberation Sans, sans-serif" font-size="8.5" fill="#000" stroke="#000" stroke-width="0.15">42</text><text transform="translate(9.6 23.8) rotate(-90) scale(1.1 1.0)" text-anchor="middle" font-family="Liberation Sans, sans-serif" font-size="8.5" fill="#000" stroke="#000" stroke-width="0.15">44</text><text transform="translate(9.6 3.3) rotate(-90) scale(1.1 1.0)" text-anchor="middle" font-family="Liberation Sans, sans-serif" font-size="8.5" fill="#000" stroke="#000" stroke-width="0.15">46</text><path d="M13 437.9 L13 449.1 L18.8 443.5Z" fill="#000"/></svg></div>
<div id="canvas"><svg id="cv" width="1043" height="577" viewBox="0 0 1043 577" style="position:absolute;left:0;top:0">
<defs>
<pattern id="gd" x="10" y="3" width="41" height="41" patternUnits="userSpaceOnUse"><g fill="#4b4b4b"><rect x="0" y="0" width="1" height="1"/><rect x="0" y="10" width="1" height="1"/><rect x="0" y="20" width="1" height="1"/><rect x="0" y="31" width="1" height="1"/><rect x="10" y="0" width="1" height="1"/><rect x="10" y="10" width="1" height="1"/><rect x="10" y="20" width="1" height="1"/><rect x="10" y="31" width="1" height="1"/><rect x="21" y="0" width="1" height="1"/><rect x="21" y="10" width="1" height="1"/><rect x="21" y="20" width="1" height="1"/><rect x="21" y="31" width="1" height="1"/><rect x="31" y="0" width="1" height="1"/><rect x="31" y="10" width="1" height="1"/><rect x="31" y="20" width="1" height="1"/><rect x="31" y="31" width="1" height="1"/></g></pattern>
<g id="v" fill="#0081b3" stroke="#4fa2c8" stroke-width="0.8"><rect x="2.5" y="-4.8" width="9.6" height="9.6"/><rect x="-4.8" y="-12.1" width="9.6" height="9.6"/><rect x="-12.1" y="-4.8" width="9.6" height="9.6"/><rect x="-4.8" y="2.8" width="9.6" height="9.6"/><rect x="-2" y="-2" width="4" height="4" fill="#0000b0" stroke="none"/></g>
</defs>
<rect x="0" y="0" width="1043" height="577" fill="#000"/>
<path d="M51.5 0V577M153.5 0V577M256.5 0V577M358.5 0V577M461.5 0V577M563.5 0V577M666.5 0V577M768.5 0V577M871.5 0V577M973.5 0V577M0 474.5H1043M0 372.5H1043M0 269.5H1043M0 167.5H1043M0 64.5H1043" stroke="#232323" stroke-width="1" fill="none"/>
<rect x="0" y="0" width="1043" height="577" fill="url(#gd)"/>
<path d="M31.5 474.5h40M51.5 454.5v40" stroke="#c00000" stroke-width="1" fill="none"/>
<use href="#v" x="574.05" y="177.25"/><use href="#v" x="604.8" y="177.25"/><use href="#v" x="635.55" y="177.25"/><use href="#v" x="666.3" y="177.25"/><use href="#v" x="697.05" y="177.25"/><use href="#v" x="727.8" y="177.25"/><use href="#v" x="758.55" y="177.25"/><use href="#v" x="789.3" y="177.25"/><use href="#v" x="820.05" y="177.25"/><use href="#v" x="850.8" y="177.25"/><use href="#v" x="881.55" y="177.25"/><use href="#v" x="912.3" y="177.25"/><use href="#v" x="589.42" y="197.75"/><use href="#v" x="620.17" y="197.75"/><use href="#v" x="650.92" y="197.75"/><use href="#v" x="681.67" y="197.75"/><use href="#v" x="712.42" y="197.75"/><use href="#v" x="743.17" y="197.75"/><use href="#v" x="773.92" y="197.75"/><use href="#v" x="804.67" y="197.75"/><use href="#v" x="835.42" y="197.75"/><use href="#v" x="866.17" y="197.75"/><use href="#v" x="896.92" y="197.75"/><use href="#v" x="574.05" y="218.25"/><use href="#v" x="604.8" y="218.25"/><use href="#v" x="635.55" y="218.25"/><use href="#v" x="666.3" y="218.25"/><use href="#v" x="697.05" y="218.25"/><use href="#v" x="727.8" y="218.25"/><use href="#v" x="758.55" y="218.25"/><use href="#v" x="789.3" y="218.25"/><use href="#v" x="820.05" y="218.25"/><use href="#v" x="850.8" y="218.25"/><use href="#v" x="881.55" y="218.25"/><use href="#v" x="912.3" y="218.25"/><use href="#v" x="589.42" y="238.75"/><use href="#v" x="620.17" y="238.75"/><use href="#v" x="650.92" y="238.75"/><use href="#v" x="681.67" y="238.75"/><use href="#v" x="712.42" y="238.75"/><use href="#v" x="743.17" y="238.75"/><use href="#v" x="773.92" y="238.75"/><use href="#v" x="804.67" y="238.75"/><use href="#v" x="835.42" y="238.75"/><use href="#v" x="866.17" y="238.75"/><use href="#v" x="896.92" y="238.75"/><use href="#v" x="574.05" y="259.25"/><use href="#v" x="604.8" y="259.25"/><use href="#v" x="635.55" y="259.25"/><use href="#v" x="666.3" y="259.25"/><use href="#v" x="697.05" y="259.25"/><use href="#v" x="727.8" y="259.25"/><use href="#v" x="758.55" y="259.25"/><use href="#v" x="789.3" y="259.25"/><use href="#v" x="820.05" y="259.25"/><use href="#v" x="850.8" y="259.25"/><use href="#v" x="881.55" y="259.25"/><use href="#v" x="912.3" y="259.25"/><use href="#v" x="589.42" y="279.75"/><use href="#v" x="620.17" y="279.75"/><use href="#v" x="650.92" y="279.75"/><use href="#v" x="681.67" y="279.75"/><use href="#v" x="712.42" y="279.75"/><use href="#v" x="743.17" y="279.75"/><use href="#v" x="773.92" y="279.75"/><use href="#v" x="804.67" y="279.75"/><use href="#v" x="835.42" y="279.75"/><use href="#v" x="866.17" y="279.75"/><use href="#v" x="896.92" y="279.75"/><use href="#v" x="574.05" y="300.25"/><use href="#v" x="604.8" y="300.25"/><use href="#v" x="635.55" y="300.25"/><use href="#v" x="666.3" y="300.25"/><use href="#v" x="697.05" y="300.25"/><use href="#v" x="727.8" y="300.25"/><use href="#v" x="589.42" y="320.75"/><use href="#v" x="620.17" y="320.75"/><use href="#v" x="650.92" y="320.75"/><use href="#v" x="681.67" y="320.75"/><use href="#v" x="712.42" y="320.75"/><use href="#v" x="574.05" y="341.25"/><use href="#v" x="604.8" y="341.25"/><use href="#v" x="635.55" y="341.25"/><use href="#v" x="666.3" y="341.25"/><use href="#v" x="697.05" y="341.25"/><use href="#v" x="727.8" y="341.25"/><use href="#v" x="589.42" y="361.75"/><use href="#v" x="620.17" y="361.75"/><use href="#v" x="650.92" y="361.75"/><use href="#v" x="681.67" y="361.75"/><use href="#v" x="712.42" y="361.75"/><use href="#v" x="574.05" y="382.25"/><use href="#v" x="604.8" y="382.25"/><use href="#v" x="635.55" y="382.25"/><use href="#v" x="666.3" y="382.25"/><use href="#v" x="697.05" y="382.25"/><use href="#v" x="727.8" y="382.25"/><use href="#v" x="589.42" y="402.75"/><use href="#v" x="620.17" y="402.75"/><use href="#v" x="650.92" y="402.75"/><use href="#v" x="681.67" y="402.75"/><use href="#v" x="712.42" y="402.75"/><use href="#v" x="574.05" y="423.25"/><use href="#v" x="604.8" y="423.25"/><use href="#v" x="635.55" y="423.25"/><use href="#v" x="666.3" y="423.25"/><use href="#v" x="697.05" y="423.25"/><use href="#v" x="727.8" y="423.25"/>
<rect x="51.3" y="115.75" width="922.5" height="358.75" rx="20.5" ry="20.5" stroke="#fff" stroke-width="2.9" fill="none"/>
<rect x="102.3" y="172.1" width="195.4" height="71.8" rx="35.9" ry="35.9" stroke="#9c9c9c" stroke-width="1.3" fill="none" stroke-dasharray="8.4 2.75 2 2.75"/>
<path d="M161.04 182.7L238.96 182.7A10 10 0 0 1 248.9 193.78L245.57 224.58A10 10 0 0 1 235.62 233.5L164.38 233.5A10 10 0 0 1 154.43 224.58L151.1 193.78A10 10 0 0 1 161.04 182.7Z" stroke="#fff" stroke-width="2.9" fill="none"/>
<circle cx="138.4" cy="208" r="7.6" stroke="#fff" stroke-width="2.8" fill="none"/>
<circle cx="261.4" cy="208" r="7.6" stroke="#fff" stroke-width="2.8" fill="none"/>
<circle cx="374.3" cy="208" r="38.3" stroke="#fff" stroke-width="2.9" fill="none"/>
<circle cx="481.9" cy="208" r="17.8" stroke="#fff" stroke-width="2.9" fill="none"/>
<rect x="101" y="317.4" width="351.4" height="108.9" rx="54.45" ry="54.45" stroke="#9c9c9c" stroke-width="1.3" fill="none" stroke-dasharray="8.4 2.75 2 2.75"/>
<path d="M193.3 339.3 L360.2 339.3 L360.2 389.2 L344.2 389.2 L330.9 404.4 L222.7 404.4 L209.6 389.2 L193.3 389.2Z" stroke="#fff" stroke-width="2.9" fill="none" stroke-linejoin="miter"/>
<circle cx="138.95" cy="372" r="16.2" stroke="#fff" stroke-width="2.9" fill="none"/>
<circle cx="414.2" cy="372" r="16.2" stroke="#fff" stroke-width="2.9" fill="none"/>
<rect x="763.9" y="310.5" width="158.8" height="112.8" rx="20" ry="20" stroke="#fff" stroke-width="2.9" fill="none"/>
<line x1="91.9" y1="208" x2="308.1" y2="208" stroke="#c60000" stroke-width="2.0" stroke-dasharray="16.4 6.7 2.1 6.7" stroke-dashoffset="11.75"/>
<line x1="200" y1="156.5" x2="200" y2="259.7" stroke="#c60000" stroke-width="2.0" stroke-dasharray="16.4 6.7 2.1 6.7" stroke-dashoffset="4.45"/>
<line x1="322.2" y1="208" x2="431.1" y2="208" stroke="#c60000" stroke-width="2.0" stroke-dasharray="16.4 6.7 2.1 6.7" stroke-dashoffset="1.6"/>
<line x1="374.3" y1="156.5" x2="374.3" y2="259.7" stroke="#c60000" stroke-width="2.0" stroke-dasharray="16.4 6.7 2.1 6.7" stroke-dashoffset="4.45"/>
<line x1="450.8" y1="208" x2="512.9" y2="208" stroke="#c60000" stroke-width="2.0" stroke-dasharray="16.4 6.7 2.1 6.7" stroke-dashoffset="9.05"/>
<line x1="481.9" y1="176.9" x2="481.9" y2="239.3" stroke="#c60000" stroke-width="2.0" stroke-dasharray="16.4 6.7 2.1 6.7" stroke-dashoffset="8.9"/>
<line x1="81.3" y1="372" x2="471.9" y2="372" stroke="#c60000" stroke-width="2.0" stroke-dasharray="16.4 6.7 2.1 6.7" stroke-dashoffset="4.3"/>
<line x1="276.7" y1="299.8" x2="276.7" y2="443.5" stroke="#c60000" stroke-width="2.0" stroke-dasharray="16.4 6.7 2.1 6.7" stroke-dashoffset="0.15"/>
<line x1="750.3" y1="366.8" x2="936" y2="366.8" stroke="#c60000" stroke-width="2.0" stroke-dasharray="16.4 6.7 2.1 6.7" stroke-dashoffset="11.05"/>
<line x1="842.9" y1="289.9" x2="842.9" y2="436.5" stroke="#c60000" stroke-width="2.0" stroke-dasharray="16.4 6.7 2.1 6.7" stroke-dashoffset="14.65"/>
<line x1="0" y1="443.5" x2="1043" y2="443.5" stroke="#3c2e00" stroke-width="1"/>
<line x1="553.5" y1="0" x2="553.5" y2="577" stroke="#3c2e00" stroke-width="1"/>
<line x1="0" y1="443.5" x2="1043" y2="443.5" stroke="#a87c00" stroke-width="1" stroke-dasharray="4.2 1.8"/>
<line x1="553.5" y1="0" x2="553.5" y2="577" stroke="#a87c00" stroke-width="1" stroke-dasharray="4.2 1.8"/>
<defs><radialGradient id="rg" cx="553" cy="443" r="40" gradientUnits="userSpaceOnUse"><stop offset="0.72" stop-color="#8aa0b4" stop-opacity="0"/><stop offset="0.80" stop-color="#7a90a4" stop-opacity="0.55"/><stop offset="0.90" stop-color="#8ca4b8" stop-opacity="0.7"/><stop offset="0.97" stop-color="#7a8fa2" stop-opacity="0.55"/><stop offset="1" stop-color="#7a8fa2" stop-opacity="0"/></radialGradient></defs>
<circle cx="553" cy="443" r="40" fill="url(#rg)"/>
<path d="M537.5 443h31M553 427.5v31" stroke="#b4b4b4" stroke-width="3.2" fill="none" stroke-linecap="butt"/>
<circle cx="553" cy="443" r="5" fill="none" stroke="#e02000" stroke-width="0.9" stroke-dasharray="2 1.6"/>
<circle cx="553" cy="443" r="1.2" fill="#402000"/>
<text x="561.3" y="461.8" font-family="Liberation Sans, sans-serif" font-size="13.9" fill="#f2c01c">Rejilla</text>
</svg></div>
<div id="vscroll"><div class="abs" style="left:5px;top:143px;width:8px;height:284px;border-radius:4px;background:#7f7f7f"></div></div>
<div id="hscroll"><div class="abs" style="left:206px;top:5px;width:604px;height:8px;border-radius:4px;background:#7f7f7f"></div></div>
<div id="zoomlbl">1 &lt; 10</div>
<div id="cmdhist"><i>Comando:</i><i style="left:69px;font-style:normal">snapgrid</i></div>
<div id="cmdline"><div class="lab">Primer punto:</div><div class="inp"></div><div class="btn"><svg width="24" height="23" style="position:absolute;left:0;top:0"><rect x="5.5" y="7.5" width="13" height="9.4" fill="#f4f4f4" stroke="#222" stroke-width="1"/><rect x="5" y="7" width="14" height="3.2" fill="#111"/></svg></div></div>
<div id="rpanel"><div class="abs" style="left:0;top:0;width:2px;height:691px;background:#e4e4e4"></div><div class="abs" style="left:2px;top:0;width:299px;height:22px;background:linear-gradient(#f0f0f0,#e2e2e2)"></div><div class="abs" style="left:2px;top:4px;width:333px;text-align:center;font-size:11.7px;line-height:14px;color:#222">Lista de capas</div><div class="abs" style="left:1.5px;top:21px;width:299px;height:1.6px;background:#c6c6c6"></div><div class="abs" style="left:1.5px;top:22.5px;width:299px;height:25px;background:linear-gradient(#e6e6e6,#f2f2f2 45%,#f8f8f8);border-bottom:1.6px solid #b2b2b2;border-left:1px solid #b8b8b8"></div><svg class="abs" style="left:0;top:0" width="301" height="200" viewBox="1154 108 301 200"><circle cx="1164" cy="118.1" r="6.7" fill="#5c5c5c"/><path d="M1161 115.1L1167 121.1M1167 115.1L1161 121.1" stroke="#fff" stroke-width="1.7"/><circle cx="1181.9" cy="118.1" r="6.7" fill="#6a6a6a"/><rect x="1180.6" y="114.8" width="4.8" height="4" fill="none" stroke="#fff" stroke-width="1"/><rect x="1178.4" y="117" width="4.8" height="4" fill="#6a6a6a" stroke="#fff" stroke-width="1"/><rect x="1214.9499999999998" y="130.6" width="0.9" height="24.4" fill="#b4b4b4"/><rect x="1274.6999999999998" y="130.6" width="0.9" height="24.4" fill="#b4b4b4"/><rect x="1334.4499999999998" y="130.6" width="0.9" height="24.4" fill="#b4b4b4"/><rect x="1394.1999999999998" y="130.6" width="0.9" height="24.4" fill="#b4b4b4"/><g transform="translate(1184.8 142.8)" opacity="1"><path d="M-8.2 0.2Q-4.4 -5.6 0 -5.6Q4.4 -5.6 8.2 0.2Q4.4 5.4 0 5.4Q-4.4 5.4 -8.2 0.2Z" fill="#000"/><path d="M-5.4 1.2Q-3 -1.2 0 -1.2Q3 -1.2 5.4 1.2Q3 3.6 0 3.6Q-3 3.6 -5.4 1.2Z" fill="#fff"/><circle cx="0.1" cy="0.6" r="2.9" fill="#000"/><circle cx="-0.9" cy="-0.3" r="0.8" fill="#fff"/></g><g transform="translate(1244.8 142.8)" opacity="0.33"><path d="M-8.2 0.2Q-4.4 -5.6 0 -5.6Q4.4 -5.6 8.2 0.2Q4.4 5.4 0 5.4Q-4.4 5.4 -8.2 0.2Z" fill="#000"/><path d="M-5.4 1.2Q-3 -1.2 0 -1.2Q3 -1.2 5.4 1.2Q3 3.6 0 3.6Q-3 3.6 -5.4 1.2Z" fill="#fff"/><circle cx="0.1" cy="0.6" r="2.9" fill="#000"/><circle cx="-0.9" cy="-0.3" r="0.8" fill="#fff"/></g><path d="M1298.6 143H1311M1304.8 136.8V149.2" stroke="#ee0000" stroke-width="2.9"/><path d="M1358.6 143H1371" stroke="#ee0000" stroke-width="2.9"/><g transform="translate(1424.6 143.6) scale(0.95)"><path d="M-7.4 7L-5.8 2.2L4.6 -7.2L7.6 -4L-2.6 5.4Z" fill="#eeb044" stroke="#b4781c" stroke-width="0.7" stroke-linejoin="round"/><path d="M4.6 -7.2L5.8 -8.2Q7.2 -8.4 8.2 -7.4Q9 -6.2 8.6 -5L7.6 -4Z" fill="#e23a2a" stroke="#a02010" stroke-width="0.5"/><path d="M-7.4 7L-6.6 4.6L-5 6.2Z" fill="#333"/></g><rect x="1161.4" y="163.3" width="15.2" height="8" fill="#000" stroke="#202020" stroke-width="0.9"/><text x="1183" y="171.8" font-family="Liberation Sans, sans-serif" font-size="13.3" fill="#111">0</text><g transform="translate(1422.7 167.4)" opacity="1"><path d="M-8.2 0.2Q-4.4 -5.6 0 -5.6Q4.4 -5.6 8.2 0.2Q4.4 5.4 0 5.4Q-4.4 5.4 -8.2 0.2Z" fill="#000"/><path d="M-5.4 1.2Q-3 -1.2 0 -1.2Q3 -1.2 5.4 1.2Q3 3.6 0 3.6Q-3 3.6 -5.4 1.2Z" fill="#fff"/><circle cx="0.1" cy="0.6" r="2.9" fill="#000"/><circle cx="-0.9" cy="-0.3" r="0.8" fill="#fff"/></g><g transform="translate(1444.8 167.70000000000002)"><path d="M-3.4 -0.6V-3.4Q-3.4 -6.4 0 -6.4Q3.4 -6.4 3.4 -3.4V-0.6" fill="none" stroke="#c4c4c4" stroke-width="1.5"/><rect x="-5" y="-0.8" width="10" height="7.4" rx="0.8" fill="#c6c6c6"/></g><rect x="1161.4" y="183.3" width="15.2" height="8" fill="#f00" stroke="#202020" stroke-width="0.9"/><text x="1183" y="191.8" font-family="Liberation Sans, sans-serif" font-size="13.3" fill="#111">Centro</text><g transform="translate(1422.7 187.4)" opacity="1"><path d="M-8.2 0.2Q-4.4 -5.6 0 -5.6Q4.4 -5.6 8.2 0.2Q4.4 5.4 0 5.4Q-4.4 5.4 -8.2 0.2Z" fill="#000"/><path d="M-5.4 1.2Q-3 -1.2 0 -1.2Q3 -1.2 5.4 1.2Q3 3.6 0 3.6Q-3 3.6 -5.4 1.2Z" fill="#fff"/><circle cx="0.1" cy="0.6" r="2.9" fill="#000"/><circle cx="-0.9" cy="-0.3" r="0.8" fill="#fff"/></g><g transform="translate(1444.8 187.70000000000002)"><path d="M-3.4 -0.6V-3.4Q-3.4 -6.4 0 -6.4Q3.4 -6.4 3.4 -3.4V-0.6" fill="none" stroke="#c4c4c4" stroke-width="1.5"/><rect x="-5" y="-0.8" width="10" height="7.4" rx="0.8" fill="#c6c6c6"/></g><rect x="1161.4" y="203.3" width="15.2" height="8" fill="#000" stroke="#202020" stroke-width="0.9"/><text x="1183" y="211.8" font-family="Liberation Sans, sans-serif" font-size="13.3" fill="#111">Ventilación</text><g transform="translate(1422.7 207.4)" opacity="1"><path d="M-8.2 0.2Q-4.4 -5.6 0 -5.6Q4.4 -5.6 8.2 0.2Q4.4 5.4 0 5.4Q-4.4 5.4 -8.2 0.2Z" fill="#000"/><path d="M-5.4 1.2Q-3 -1.2 0 -1.2Q3 -1.2 5.4 1.2Q3 3.6 0 3.6Q-3 3.6 -5.4 1.2Z" fill="#fff"/><circle cx="0.1" cy="0.6" r="2.9" fill="#000"/><circle cx="-0.9" cy="-0.3" r="0.8" fill="#fff"/></g><g transform="translate(1444.8 207.70000000000002)"><path d="M-3.4 -0.6V-3.4Q-3.4 -6.4 0 -6.4Q3.4 -6.4 3.4 -3.4V-0.6" fill="none" stroke="#c4c4c4" stroke-width="1.5"/><rect x="-5" y="-0.8" width="10" height="7.4" rx="0.8" fill="#c6c6c6"/></g><rect x="1161.4" y="223.3" width="15.2" height="8" fill="#a0a0a4" stroke="#202020" stroke-width="0.9"/><text x="1183" y="231.8" font-family="Liberation Sans, sans-serif" font-size="13.3" fill="#111">Volver</text><g transform="translate(1422.7 227.4)" opacity="1"><path d="M-8.2 0.2Q-4.4 -5.6 0 -5.6Q4.4 -5.6 8.2 0.2Q4.4 5.4 0 5.4Q-4.4 5.4 -8.2 0.2Z" fill="#000"/><path d="M-5.4 1.2Q-3 -1.2 0 -1.2Q3 -1.2 5.4 1.2Q3 3.6 0 3.6Q-3 3.6 -5.4 1.2Z" fill="#fff"/><circle cx="0.1" cy="0.6" r="2.9" fill="#000"/><circle cx="-0.9" cy="-0.3" r="0.8" fill="#fff"/></g><g transform="translate(1444.8 227.70000000000002)"><path d="M-3.4 -0.6V-3.4Q-3.4 -6.4 0 -6.4Q3.4 -6.4 3.4 -3.4V-0.6" fill="none" stroke="#c4c4c4" stroke-width="1.5"/><rect x="-5" y="-0.8" width="10" height="7.4" rx="0.8" fill="#c6c6c6"/></g><g transform="translate(1401 227.4) scale(0.85)"><path d="M-7.4 7L-5.8 2.2L4.6 -7.2L7.6 -4L-2.6 5.4Z" fill="#eeb044" stroke="#b4781c" stroke-width="0.7" stroke-linejoin="round"/><path d="M4.6 -7.2L5.8 -8.2Q7.2 -8.4 8.2 -7.4Q9 -6.2 8.6 -5L7.6 -4Z" fill="#e23a2a" stroke="#a02010" stroke-width="0.5"/><path d="M-7.4 7L-6.6 4.6L-5 6.2Z" fill="#333"/></g></svg></div>
<div id="rdock"><svg class="abs" style="left:0;top:0" width="45" height="691" viewBox="1455 108 45 691"><rect x="1454.6" y="108" width="1.2" height="691" fill="#cfcfcf"/><rect x="1462.3" y="115.8" width="2" height="2" fill="#a2a2a2"/><rect x="1468.3999999999999" y="115.8" width="2" height="2" fill="#a2a2a2"/><rect x="1474.5" y="115.8" width="2" height="2" fill="#a2a2a2"/><rect x="1480.6" y="115.8" width="2" height="2" fill="#a2a2a2"/><rect x="1486.7" y="115.8" width="2" height="2" fill="#a2a2a2"/><rect x="1456.2" y="120.2" width="42.4" height="42.4" rx="5" fill="#b8b8b8"/><rect x="1456.2" y="417.3" width="42.4" height="42.7" rx="5" fill="#b8b8b8"/><line x1="1458" y1="261.5" x2="1499" y2="261.5" stroke="#666" stroke-width="1" stroke-dasharray="1 2"/><line x1="1458" y1="409.5" x2="1499" y2="409.5" stroke="#666" stroke-width="1" stroke-dasharray="1 2"/><g transform="translate(1463.3 127.3)"><rect x="0.4" y="0.4" width="26.6" height="26.6" fill="#fff" stroke="#444" stroke-width="0.8"/><rect x="0" y="0" width="27.4" height="4.8" fill="#000"/><rect x="1.2" y="1" width="3" height="2.8" fill="#fff"/><g transform="translate(13.6 16) skewY(-22)"><rect x="-6.6" y="-4.4" width="10" height="9" fill="#ddd" stroke="#555" stroke-width="0.7"/><rect x="-4.6" y="-4.8" width="10" height="9" fill="#eee" stroke="#555" stroke-width="0.7"/><rect x="-2.6" y="-5.2" width="10" height="9" fill="#fafafa" stroke="#444" stroke-width="0.8"/><path d="M1 1.6L4.6 1.6L4.6 -2.4Z" fill="none" stroke="#e04040" stroke-width="0.7"/></g></g><g transform="translate(1463.3 174.2)"><rect x="0.4" y="0.4" width="26.6" height="26.6" fill="#fff" stroke="#444" stroke-width="0.8"/><rect x="0" y="0" width="27.4" height="4.8" fill="#000"/><rect x="1.2" y="1" width="3" height="2.8" fill="#fff"/><rect x="7" y="10" width="9.4" height="7.4" fill="#f6ecc4" stroke="#555" stroke-width="0.7"/><circle cx="16" cy="17.4" r="4.2" fill="#f6ecc4" fill-opacity="0.7" stroke="#666" stroke-width="0.7"/></g><g transform="translate(1463.3 220.1)"><rect x="0.4" y="0.4" width="26.6" height="26.6" fill="#fff" stroke="#444" stroke-width="0.8"/><rect x="0" y="0" width="27.4" height="4.8" fill="#000"/><rect x="1.2" y="1" width="3" height="2.8" fill="#fff"/><rect x="5.6" y="10.4" width="16.2" height="10.4" rx="1.6" fill="#f4f6fc" stroke="#c4ccea" stroke-width="0.9"/></g><g transform="translate(1463.3 276.1)"><rect x="0.4" y="0.4" width="26.6" height="26.6" fill="#fff" stroke="#444" stroke-width="0.8"/><rect x="0" y="0" width="27.4" height="4.8" fill="#000"/><rect x="1.2" y="1" width="3" height="2.8" fill="#fff"/><rect x="3.4" y="8" width="4.2" height="3.2" fill="#000"/><rect x="10.2" y="8.1" width="13.6" height="3" fill="#fff" stroke="#444" stroke-width="0.6"/><rect x="3.4" y="14" width="4.2" height="3.2" fill="#000"/><rect x="10.2" y="14.1" width="13.6" height="3" fill="#fff" stroke="#444" stroke-width="0.6"/><rect x="3.4" y="20" width="4.2" height="3.2" fill="#000"/><rect x="10.2" y="20.1" width="13.6" height="3" fill="#fff" stroke="#444" stroke-width="0.6"/></g><g transform="translate(1463.3 322.2)"><rect x="0.4" y="0.4" width="26.6" height="26.6" fill="#fff" stroke="#444" stroke-width="0.8"/><rect x="0" y="0" width="27.4" height="4.8" fill="#000"/><rect x="1.2" y="1" width="3" height="2.8" fill="#fff"/><path d="M7 9.4Q13.6 7.4 20.4 9.4L15.2 15.6V22L12.4 20V15.6Z" fill="#9a9a9a" stroke="#555" stroke-width="0.6"/><ellipse cx="13.7" cy="9.4" rx="6.7" ry="1.5" fill="#c8c8c8" stroke="#555" stroke-width="0.5"/></g><g transform="translate(1463.3 368.1)"><rect x="0.4" y="0.4" width="26.6" height="26.6" fill="#fff" stroke="#444" stroke-width="0.8"/><rect x="0" y="0" width="27.4" height="4.8" fill="#000"/><rect x="1.2" y="1" width="3" height="2.8" fill="#fff"/><path d="M6 9.6L9.6 12V20L6 22.4Z" fill="#e8e8e8" stroke="#444" stroke-width="0.7"/><rect x="9.6" y="12.2" width="11.6" height="7.6" rx="1" fill="#888" stroke="#555" stroke-width="0.6"/><path d="M4 16H23.6" stroke="#f08080" stroke-width="0.6" stroke-dasharray="2 1"/></g><g transform="translate(1463.3 424.1)"><rect x="0.4" y="0.4" width="26.6" height="26.6" fill="#fff" stroke="#444" stroke-width="0.8"/><rect x="0" y="0" width="27.4" height="4.8" fill="#000"/><rect x="1.2" y="1" width="3" height="2.8" fill="#fff"/><path d="M2.4 8.8H12M2.4 12H10.6M2.4 15.2H13.6M2.4 18.4H14.4" stroke="#777" stroke-width="1.1" stroke-dasharray="1.6 0.5"/><path d="M0.4 22.4H27" stroke="#444" stroke-width="0.7"/><path d="M8 25H24" stroke="#666" stroke-width="1.2" stroke-dasharray="1.6 0.5"/></g><g transform="translate(1463.3 471.3)"><rect x="0.4" y="0.4" width="26.6" height="26.6" fill="#fff" stroke="#444" stroke-width="0.8"/><rect x="0" y="0" width="27.4" height="4.8" fill="#000"/><rect x="1.2" y="1" width="3" height="2.8" fill="#fff"/><rect x="7.6" y="9.4" width="12.4" height="13.8" rx="0.8" fill="#c8904a" stroke="#9a6a2a" stroke-width="0.5"/><rect x="9" y="10.8" width="9.6" height="11" fill="#f2f2f0"/><rect x="11" y="8.4" width="5.6" height="2.6" fill="#999"/><path d="M10.4 14H17M10.4 16H17M10.4 18H15" stroke="#ccc" stroke-width="0.7"/><rect x="16" y="19.6" width="2.6" height="2.2" fill="#8aa"/></g></svg></div>
<div id="status"><span style="left:2px;top:8px">49,3</span><span style="left:2px;top:28px">@0,0</span><div class="abs" style="left:253px;top:2px;width:1px;height:40px;background:#7d7d7d"></div><span style="left:256px;top:8px;letter-spacing:0.4px">49.0918&lt;3.50°</span><span style="left:256px;top:28px">@0&lt;0.00°</span><span style="left:640px;top:18px">Primer punto</span><span style="left:754px;top:18px">Cancelar</span><span style="left:949px;top:12px">Las entidades seleccionadas:</span><span style="left:949px;top:23px">216 Círculos en capa "Ventilación".</span><div class="abs" style="left:507px;top:20px;width:5px;height:5px;border-radius:3px;background:#cacaca"></div><div class="abs" style="left:941px;top:20px;width:5px;height:5px;border-radius:3px;background:#cacaca"></div><div class="abs" style="left:1270px;top:20px;width:5px;height:5px;border-radius:3px;background:#cacaca"></div><svg class="abs" style="left:715px;top:5px" width="22" height="32" viewBox="0 0 22 32"><rect x="2.5" y="1.5" width="17" height="29.4" rx="8.5" ry="8.5" fill="#fff" stroke="#3a3a3a" stroke-width="1"/><path d="M2.5 13.5H19.5M11 1.5V13.5" stroke="#3a3a3a" stroke-width="1" fill="none"/><rect x="9.5" y="4" width="3" height="6" rx="1.5" fill="#fff" stroke="#444" stroke-width="0.9"/></svg></div>
</div></body></html>
